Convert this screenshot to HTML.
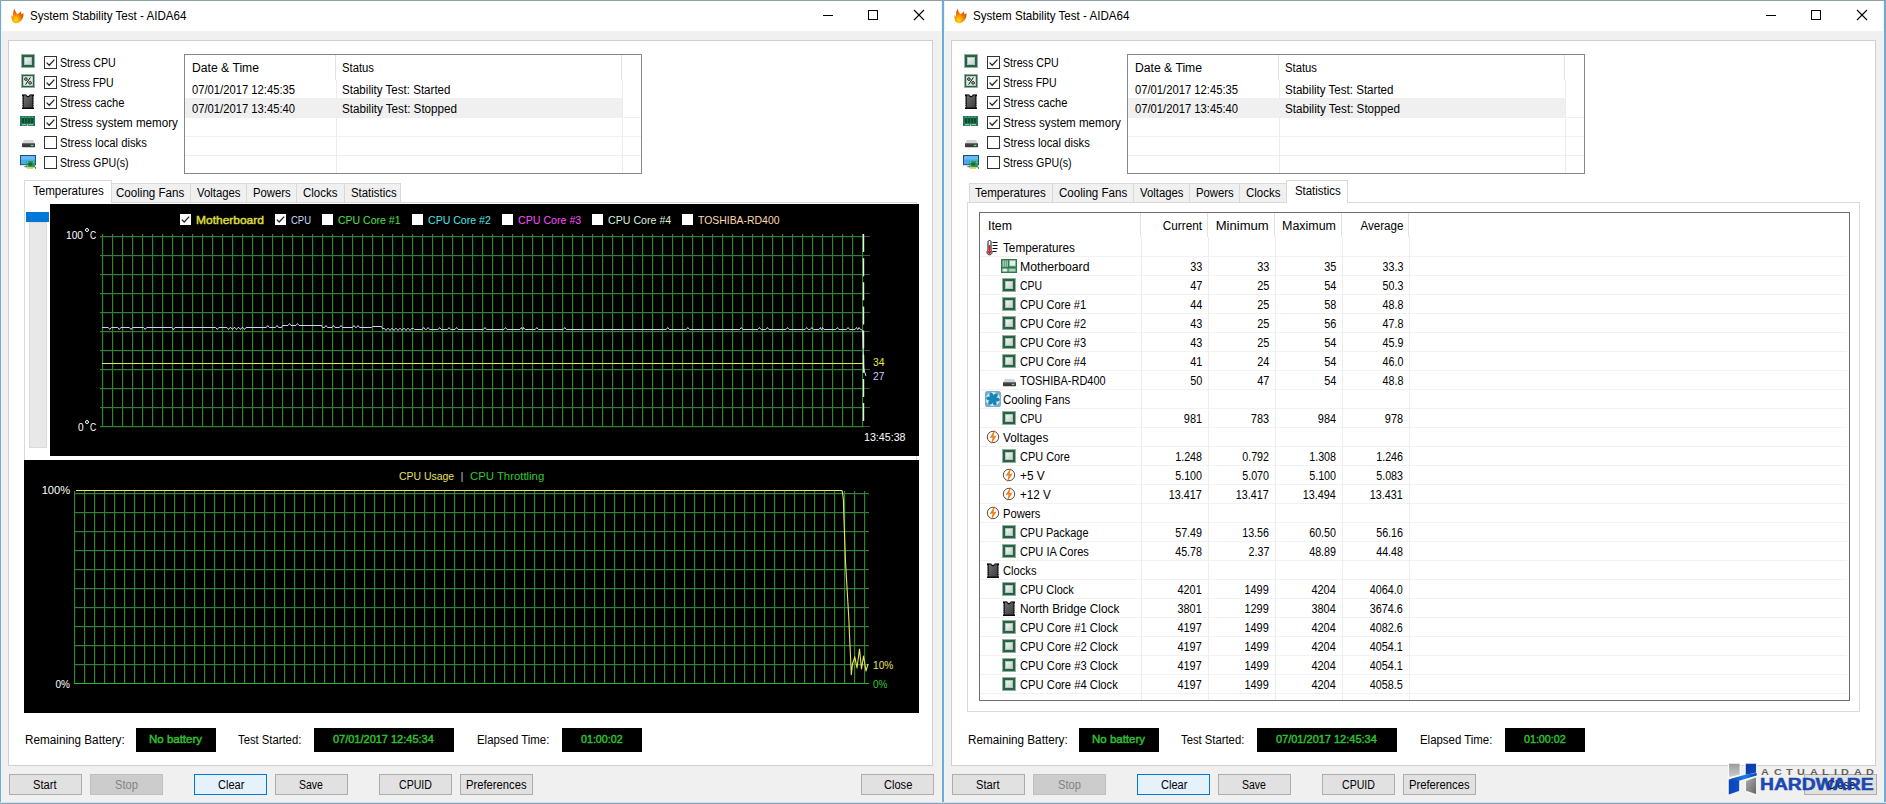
<!DOCTYPE html>
<html><head><meta charset="utf-8"><title>System Stability Test - AIDA64</title>
<style>
html,body{margin:0;padding:0;}
body{width:1886px;height:804px;position:relative;overflow:hidden;background:#f0f0f0;font-family:"Liberation Sans",sans-serif;}
div{position:absolute;}
.t{white-space:nowrap;}
svg{position:absolute;overflow:visible;}
</style></head><body>
<div style="left:0;top:0;width:1886px;height:804px;background:#f0f0f0"></div>
<div style="left:1px;top:1px;width:941px;height:30px;background:#fff;"></div>
<svg style="left:11px;top:7.5px" width="14" height="16" viewBox="0 0 14 16"><defs><radialGradient id="fg11" cx="0.38" cy="0.8" r="0.6"><stop offset="0" stop-color="#ffe000"/><stop offset="0.35" stop-color="#ffb000"/><stop offset="0.7" stop-color="#f57a00"/><stop offset="1" stop-color="#d85a00"/></radialGradient></defs>
<path d="M3.3 0.4 C4 3 5.2 4.8 6.6 6.2 C7.8 5.4 9 4.6 9.7 3.3 C10.2 4.6 10.4 5.6 10.6 6.6 C11.2 6.2 11.8 5.6 12.3 4.8 C13 7.6 12 10.6 10 12.8 C8.4 14.6 6.4 15.4 4.6 15.2 C2.2 14.8 0.6 12.6 0.6 10.2 C0.6 9.2 0.5 8.2 0.2 7.2 C0.8 7.6 1.4 8.2 1.9 8.8 C1.8 6 2.4 3 3.3 0.4 Z" fill="url(#fg11)"/></svg>
<div class="t" style="left:30px;top:8px;font-size:13px;line-height:15px;color:#000;transform:scaleX(0.8926);transform-origin:0 0;">System Stability Test - AIDA64</div>
<svg style="left:818px;top:5px" width="112" height="20" viewBox="0 0 112 20"><path d="M5 10.5 H15" stroke="#000" stroke-width="1" fill="none"/><rect x="50.5" y="5.5" width="9" height="9" stroke="#000" stroke-width="1" fill="none"/><path d="M96 5 L106 15 M106 5 L96 15" stroke="#000" stroke-width="1.1" fill="none"/></svg>
<div style="left:8px;top:40px;width:925px;height:726px;background:#fff;border:1px solid #cfcfcf;box-sizing:border-box;"></div>
<svg style="left:44px;top:56px" width="13" height="13" viewBox="0 0 13 13"><rect x="0.5" y="0.5" width="12" height="12" fill="#fff" stroke="#333" stroke-width="1"/><path d="M2.6 6.6 L5.2 9.2 L10.4 3.6" fill="none" stroke="#222" stroke-width="1.3"/></svg>
<div class="t" style="left:60px;top:56px;font-size:12px;line-height:14px;color:#000;transform:scaleX(0.8886);transform-origin:0 0;">Stress CPU</div>
<svg style="left:44px;top:76px" width="13" height="13" viewBox="0 0 13 13"><rect x="0.5" y="0.5" width="12" height="12" fill="#fff" stroke="#333" stroke-width="1"/><path d="M2.6 6.6 L5.2 9.2 L10.4 3.6" fill="none" stroke="#222" stroke-width="1.3"/></svg>
<div class="t" style="left:60px;top:76px;font-size:12px;line-height:14px;color:#000;transform:scaleX(0.8754);transform-origin:0 0;">Stress FPU</div>
<svg style="left:44px;top:96px" width="13" height="13" viewBox="0 0 13 13"><rect x="0.5" y="0.5" width="12" height="12" fill="#fff" stroke="#333" stroke-width="1"/><path d="M2.6 6.6 L5.2 9.2 L10.4 3.6" fill="none" stroke="#222" stroke-width="1.3"/></svg>
<div class="t" style="left:60px;top:96px;font-size:12px;line-height:14px;color:#000;transform:scaleX(0.9299);transform-origin:0 0;">Stress cache</div>
<svg style="left:44px;top:116px" width="13" height="13" viewBox="0 0 13 13"><rect x="0.5" y="0.5" width="12" height="12" fill="#fff" stroke="#333" stroke-width="1"/><path d="M2.6 6.6 L5.2 9.2 L10.4 3.6" fill="none" stroke="#222" stroke-width="1.3"/></svg>
<div class="t" style="left:60px;top:116px;font-size:12px;line-height:14px;color:#000;transform:scaleX(0.9654);transform-origin:0 0;">Stress system memory</div>
<svg style="left:44px;top:136px" width="13" height="13" viewBox="0 0 13 13"><rect x="0.5" y="0.5" width="12" height="12" fill="#fff" stroke="#333" stroke-width="1"/></svg>
<div class="t" style="left:60px;top:136px;font-size:12px;line-height:14px;color:#000;transform:scaleX(0.9364);transform-origin:0 0;">Stress local disks</div>
<svg style="left:44px;top:156px" width="13" height="13" viewBox="0 0 13 13"><rect x="0.5" y="0.5" width="12" height="12" fill="#fff" stroke="#333" stroke-width="1"/></svg>
<div class="t" style="left:60px;top:156px;font-size:12px;line-height:14px;color:#000;transform:scaleX(0.8870);transform-origin:0 0;">Stress GPU(s)</div>
<svg style="left:21px;top:54px" width="14" height="14" viewBox="0 0 14 14"><rect x="0.5" y="0.5" width="13" height="13" fill="none" stroke="#2b6145" stroke-width="1" stroke-dasharray="1 1"/><rect x="1" y="1" width="12" height="12" fill="#2b6145"/>
<defs><linearGradient id="cg21_54" x1="0" y1="0" x2="1" y2="1"><stop offset="0" stop-color="#f2f7f4"/><stop offset="1" stop-color="#c5cfcb"/></linearGradient></defs>
<rect x="3.5" y="3.5" width="7" height="7" fill="url(#cg21_54)" stroke="#a9c9b8" stroke-width="1"/></svg>
<svg style="left:21px;top:74px" width="14" height="14" viewBox="0 0 14 14"><rect x="0.5" y="0.5" width="13" height="13" fill="none" stroke="#2b6145" stroke-width="1" stroke-dasharray="1 1"/><rect x="1" y="1" width="12" height="12" fill="#2b6145"/>
<rect x="2.2" y="2.2" width="9.6" height="9.6" fill="#dcebe2"/>
<g stroke="#111" stroke-width="1" fill="none"><circle cx="4.9" cy="5.1" r="1.3"/><circle cx="9.1" cy="8.9" r="1.3"/><path d="M9.4 3.4 L4.6 10.6"/></g></svg>
<svg style="left:22px;top:94px" width="12" height="15" viewBox="0 0 12 15"><rect x="0" y="0.4" width="12" height="14.6" fill="#0a0a0a"/>
<defs><linearGradient id="ch22_94" x1="0" y1="0" x2="1" y2="1"><stop offset="0" stop-color="#707070"/><stop offset="1" stop-color="#3e3e3e"/></linearGradient></defs>
<path d="M2 1.4 H4 C4.4 4 7.6 4 8 1.4 H10 V13.6 H2 Z" fill="url(#ch22_94)"/>
<path d="M4.2 0 C4.6 2.6 7.4 2.6 7.8 0 Z" fill="#fff"/><rect x="0" y="2.60" width="1.2" height="0.95" fill="#fff"/><rect x="10.8" y="2.60" width="1.2" height="0.95" fill="#fff"/><rect x="0" y="4.55" width="1.2" height="0.95" fill="#fff"/><rect x="10.8" y="4.55" width="1.2" height="0.95" fill="#fff"/><rect x="0" y="6.50" width="1.2" height="0.95" fill="#fff"/><rect x="10.8" y="6.50" width="1.2" height="0.95" fill="#fff"/><rect x="0" y="8.45" width="1.2" height="0.95" fill="#fff"/><rect x="10.8" y="8.45" width="1.2" height="0.95" fill="#fff"/><rect x="0" y="10.40" width="1.2" height="0.95" fill="#fff"/><rect x="10.8" y="10.40" width="1.2" height="0.95" fill="#fff"/><rect x="0" y="12.35" width="1.2" height="0.95" fill="#fff"/><rect x="10.8" y="12.35" width="1.2" height="0.95" fill="#fff"/></svg>
<svg style="left:20px;top:116px" width="15" height="10" viewBox="0 0 15 10"><rect x="0" y="0" width="15" height="9.8" fill="#237c56"/>
<rect x="0" y="7.8" width="15" height="2" fill="#1c6a48"/>
<g fill="#0f4a33"><rect x="1.8" y="2" width="2.3" height="5"/><rect x="4.9" y="2" width="2.3" height="5"/><rect x="8" y="2" width="2.3" height="5"/><rect x="11.1" y="2" width="2.3" height="5"/></g>
<g fill="#9fd8bd"><rect x="1.8" y="8.2" width="4.4" height="1"/><rect x="8.4" y="8.2" width="4.8" height="1"/><rect x="2.4" y="0.8" width="1" height="0.9"/><rect x="5.5" y="0.8" width="1" height="0.9"/><rect x="8.6" y="0.8" width="1" height="0.9"/><rect x="11.7" y="0.8" width="1" height="0.9"/></g>
<rect x="6.9" y="8.4" width="1" height="1.4" fill="#fff"/></svg>
<svg style="left:21.5px;top:140px" width="13" height="8" viewBox="0 0 13 8"><path d="M2 0 H11 L13 3.4 H0 Z" fill="#d4d4d4"/>
<rect x="0" y="3.2" width="13" height="4" rx="0.6" fill="#3a3a3a"/>
<rect x="0" y="3.2" width="13" height="1" fill="#707070"/>
<rect x="8.8" y="4.8" width="2.6" height="1.3" fill="#5fe07a"/></svg>
<svg style="left:20px;top:155px" width="16" height="14" viewBox="0 0 16 14"><rect x="0.5" y="0.5" width="15" height="9.2" fill="#4aa8ec" stroke="#1e4f7a" stroke-width="1"/>
<rect x="1.2" y="1.2" width="13.6" height="3.2" fill="#6bbcf4"/>
<rect x="6.4" y="6" width="8.8" height="6.4" fill="#2f9a5c"/>
<rect x="8.2" y="7.6" width="4" height="3" fill="#176a40"/>
<rect x="7.2" y="6.6" width="1" height="1" fill="#b8f0c8"/><rect x="13.2" y="6.6" width="1" height="1" fill="#b8f0c8"/><rect x="7.2" y="10.6" width="1" height="1" fill="#b8f0c8"/>
<rect x="4.4" y="11.2" width="2.6" height="1" fill="#2a7a50"/>
<rect x="7" y="12.4" width="6" height="1.4" fill="#e8c838"/>
<rect x="15" y="12" width="0.8" height="2" fill="#2a7a50"/></svg>
<div style="left:184px;top:54px;width:458px;height:120px;background:#fff;border:1px solid #828790;box-sizing:border-box;"></div>
<div style="left:185px;top:98px;width:437px;height:19px;background:#f0f0f0;"></div>
<div style="left:185px;top:117px;width:456px;height:1px;background:#f0f0f0;"></div>
<div style="left:185px;top:136px;width:456px;height:1px;background:#f0f0f0;"></div>
<div style="left:185px;top:155px;width:456px;height:1px;background:#f0f0f0;"></div>
<div style="left:335px;top:55px;width:1px;height:25px;background:#e2e2e2;"></div>
<div style="left:621px;top:55px;width:1px;height:25px;background:#e2e2e2;"></div>
<div style="left:336px;top:80px;width:1px;height:18px;background:#ececec;"></div>
<div style="left:622px;top:80px;width:1px;height:93px;background:#ececec;"></div>
<div style="left:336px;top:117px;width:1px;height:56px;background:#ececec;"></div>
<div class="t" style="left:192px;top:61px;font-size:12px;line-height:14px;color:#000;transform:scaleX(1.0148);transform-origin:0 0;">Date &amp; Time</div>
<div class="t" style="left:342px;top:61px;font-size:12px;line-height:14px;color:#000;transform:scaleX(0.9406);transform-origin:0 0;">Status</div>
<div class="t" style="left:192px;top:83px;font-size:12px;line-height:14px;color:#000;transform:scaleX(0.9355);transform-origin:0 0;">07/01/2017 12:45:35</div>
<div class="t" style="left:342px;top:83px;font-size:12px;line-height:14px;color:#000;transform:scaleX(0.9644);transform-origin:0 0;">Stability Test: Started</div>
<div class="t" style="left:192px;top:102px;font-size:12px;line-height:14px;color:#000;transform:scaleX(0.9355);transform-origin:0 0;">07/01/2017 13:45:40</div>
<div class="t" style="left:342px;top:102px;font-size:12px;line-height:14px;color:#000;transform:scaleX(0.9703);transform-origin:0 0;">Stability Test: Stopped</div>
<div style="left:24px;top:202px;width:893px;height:510px;border:1px solid #d9d9d9;box-sizing:border-box;"></div>
<div style="left:111px;top:183px;width:80px;height:20px;background:#f0f0f0;border:1px solid #d9d9d9;box-sizing:border-box;"></div>
<div class="t" style="left:116.4px;top:186.3px;font-size:12px;line-height:14px;color:#000;transform:scaleX(0.9660);transform-origin:0 0;">Cooling Fans</div>
<div style="left:190px;top:183px;width:57px;height:20px;background:#f0f0f0;border:1px solid #d9d9d9;box-sizing:border-box;"></div>
<div class="t" style="left:197.4px;top:186.3px;font-size:12px;line-height:14px;color:#000;transform:scaleX(0.9449);transform-origin:0 0;">Voltages</div>
<div style="left:246px;top:183px;width:51px;height:20px;background:#f0f0f0;border:1px solid #d9d9d9;box-sizing:border-box;"></div>
<div class="t" style="left:253px;top:186.3px;font-size:12px;line-height:14px;color:#000;transform:scaleX(0.9421);transform-origin:0 0;">Powers</div>
<div style="left:296px;top:183px;width:49px;height:20px;background:#f0f0f0;border:1px solid #d9d9d9;box-sizing:border-box;"></div>
<div class="t" style="left:303.4px;top:186.3px;font-size:12px;line-height:14px;color:#000;transform:scaleX(0.9554);transform-origin:0 0;">Clocks</div>
<div style="left:344px;top:183px;width:57px;height:20px;background:#f0f0f0;border:1px solid #d9d9d9;box-sizing:border-box;"></div>
<div class="t" style="left:351.2px;top:186.3px;font-size:12px;line-height:14px;color:#000;transform:scaleX(0.9498);transform-origin:0 0;">Statistics</div>
<div style="left:24px;top:180px;width:88px;height:23px;background:#fff;border:1px solid #d9d9d9;box-sizing:border-box;border-bottom:none;"></div>
<div class="t" style="left:33px;top:184.3px;font-size:12px;line-height:14px;color:#000;transform:scaleX(0.9636);transform-origin:0 0;">Temperatures</div>
<div style="left:29px;top:222px;width:18px;height:226px;background:#e8e8e8;border:1px solid #dadada;box-sizing:border-box;"></div>
<div style="left:26px;top:212px;width:23px;height:10px;background:#0078d7;"></div>
<div style="left:50px;top:204px;width:869px;height:252px;background:#000;"></div>
<svg style="left:0px;top:0px" width="943" height="460" viewBox="0 0 943 460"><path d="M103.5 234 V427 M113.5 234 V427 M123.5 234 V427 M133.5 234 V427 M143.5 234 V427 M153.5 234 V427 M163.5 234 V427 M173.5 234 V427 M183.5 234 V427 M193.5 234 V427 M203.5 234 V427 M213.5 234 V427 M223.5 234 V427 M233.5 234 V427 M243.5 234 V427 M253.5 234 V427 M263.5 234 V427 M273.5 234 V427 M283.5 234 V427 M293.5 234 V427 M303.5 234 V427 M313.5 234 V427 M323.5 234 V427 M333.5 234 V427 M343.5 234 V427 M353.5 234 V427 M363.5 234 V427 M373.5 234 V427 M383.5 234 V427 M393.5 234 V427 M403.5 234 V427 M413.5 234 V427 M423.5 234 V427 M433.5 234 V427 M443.5 234 V427 M453.5 234 V427 M463.5 234 V427 M473.5 234 V427 M483.5 234 V427 M493.5 234 V427 M503.5 234 V427 M513.5 234 V427 M523.5 234 V427 M533.5 234 V427 M543.5 234 V427 M553.5 234 V427 M563.5 234 V427 M573.5 234 V427 M583.5 234 V427 M593.5 234 V427 M603.5 234 V427 M613.5 234 V427 M623.5 234 V427 M633.5 234 V427 M643.5 234 V427 M653.5 234 V427 M663.5 234 V427 M673.5 234 V427 M683.5 234 V427 M693.5 234 V427 M703.5 234 V427 M713.5 234 V427 M723.5 234 V427 M733.5 234 V427 M743.5 234 V427 M753.5 234 V427 M763.5 234 V427 M773.5 234 V427 M783.5 234 V427 M793.5 234 V427 M803.5 234 V427 M813.5 234 V427 M823.5 234 V427 M833.5 234 V427 M843.5 234 V427 M853.5 234 V427 M863.5 234 V427 " stroke="#002000" stroke-width="1" fill="none"/><path d="M100 237.5 H864 M100 256.5 H864 M100 275.5 H864 M100 294.5 H864 M100 313.5 H864 M100 332.5 H864 M100 351.5 H864 M100 370.5 H864 M100 389.5 H864 M100 408.5 H864 M100 427.5 H864 " stroke="#002000" stroke-width="1" fill="none"/><path d="M102.5 234 V427 M112.5 234 V427 M122.5 234 V427 M132.5 234 V427 M142.5 234 V427 M152.5 234 V427 M162.5 234 V427 M172.5 234 V427 M182.5 234 V427 M192.5 234 V427 M202.5 234 V427 M212.5 234 V427 M222.5 234 V427 M232.5 234 V427 M242.5 234 V427 M252.5 234 V427 M262.5 234 V427 M272.5 234 V427 M282.5 234 V427 M292.5 234 V427 M302.5 234 V427 M312.5 234 V427 M322.5 234 V427 M332.5 234 V427 M342.5 234 V427 M352.5 234 V427 M362.5 234 V427 M372.5 234 V427 M382.5 234 V427 M392.5 234 V427 M402.5 234 V427 M412.5 234 V427 M422.5 234 V427 M432.5 234 V427 M442.5 234 V427 M452.5 234 V427 M462.5 234 V427 M472.5 234 V427 M482.5 234 V427 M492.5 234 V427 M502.5 234 V427 M512.5 234 V427 M522.5 234 V427 M532.5 234 V427 M542.5 234 V427 M552.5 234 V427 M562.5 234 V427 M572.5 234 V427 M582.5 234 V427 M592.5 234 V427 M602.5 234 V427 M612.5 234 V427 M622.5 234 V427 M632.5 234 V427 M642.5 234 V427 M652.5 234 V427 M662.5 234 V427 M672.5 234 V427 M682.5 234 V427 M692.5 234 V427 M702.5 234 V427 M712.5 234 V427 M722.5 234 V427 M732.5 234 V427 M742.5 234 V427 M752.5 234 V427 M762.5 234 V427 M772.5 234 V427 M782.5 234 V427 M792.5 234 V427 M802.5 234 V427 M812.5 234 V427 M822.5 234 V427 M832.5 234 V427 M842.5 234 V427 M852.5 234 V427 M862.5 234 V427 " stroke="#3a7e3e" stroke-width="1" fill="none"/><path d="M100 236.5 H864 M100 255.5 H864 M100 274.5 H864 M100 293.5 H864 M100 312.5 H864 M100 331.5 H864 M100 350.5 H864 M100 369.5 H864 M100 388.5 H864 M100 407.5 H864 M100 426.5 H864 " stroke="#3a7e3e" stroke-width="1" fill="none"/><path d="M864 236.5 H870 M864 255.5 H870 M864 274.5 H870 M864 293.5 H870 M864 312.5 H870 M864 331.5 H870 M864 350.5 H870 M864 369.5 H870 M864 388.5 H870 M864 407.5 H870 M864 426.5 H870 " stroke="#3a5a3a" stroke-width="1" fill="none"/><path d="M102 363.5 H864" stroke="#e6e65a" stroke-width="1" fill="none"/><path d="M102.0 327.5 L108.3 327.5 L109.8 329.5 L111.3 327.5 L117.8 327.5 L119.3 329.5 L120.8 327.5 L129.5 327.5 L131.0 329.5 L132.5 327.5 L143.7 327.5 L145.2 329.5 L146.7 327.5 L171.9 327.5 L173.4 329.5 L174.9 327.5 L215.8 327.5 L217.3 329.5 L218.8 327.5 L227.0 327.5 L228.5 329.5 L230.0 327.5 L231.0 327.5 L232.5 329.5 L234.0 327.5 L235.0 327.5 L236.5 329.5 L238.0 327.5 L239.0 327.5 L240.5 329.5 L242.0 327.5 L243.0 327.5 L244.5 329.5 L246.0 327.5 L266.3 327.5 L267.8 325.5 L269.3 327.5 L275.5 327.5 L277.0 325.5 L278.5 327.5 L281.5 327.5 L282.5 325.5 L288.0 325.5 L289.5 323.5 L291.0 325.5 L296.0 325.5 L297.5 323.5 L299.0 325.5 L321.5 325.5 L322.5 327.5 L324.5 327.5 L326.0 325.5 L327.5 327.5 L332.0 327.5 L333.5 325.5 L335.0 327.5 L339.5 327.5 L341.0 325.5 L342.5 327.5 L352.5 327.5 L354.0 325.5 L355.5 327.5 L356.5 327.5 L358.0 325.5 L359.5 327.5 L371.5 327.5 L372.5 326.5 L381.5 326.5 L382.5 328.5 L384.5 328.5 L386.0 330.5 L387.5 328.5 L388.5 328.5 L390.0 330.5 L391.5 328.5 L392.5 328.5 L394.0 330.5 L395.5 328.5 L396.5 328.5 L398.0 330.5 L399.5 328.5 L400.5 328.5 L402.0 330.5 L403.5 328.5 L404.5 328.5 L406.0 330.5 L407.5 328.5 L408.5 328.5 L410.0 330.5 L411.5 328.5 L413.5 328.5 L414.5 329.5 L422.2 329.5 L423.7 327.5 L425.2 329.5 L426.5 329.5 L428.0 327.5 L429.5 329.5 L438.1 329.5 L439.6 327.5 L441.1 329.5 L447.5 329.5 L449.0 327.5 L450.5 329.5 L455.0 329.5 L456.5 327.5 L458.0 329.5 L483.5 329.5 L485.0 327.5 L486.5 329.5 L504.0 329.5 L505.5 327.5 L507.0 329.5 L520.0 329.5 L521.5 327.5 L522.0 329.5 L523.0 329.5 L523.5 327.5 L525.0 329.5 L535.3 329.5 L536.8 327.5 L538.3 329.5 L563.3 329.5 L564.8 327.5 L566.3 329.5 L666.2 329.5 L667.7 327.5 L669.2 329.5 L686.3 329.5 L687.8 327.5 L689.3 329.5 L739.8 329.5 L741.3 327.5 L742.8 329.5 L758.0 329.5 L759.5 327.5 L761.0 329.5 L765.9 329.5 L767.4 327.5 L768.9 329.5 L786.0 329.5 L787.5 327.5 L789.0 329.5 L805.1 329.5 L806.6 327.5 L808.1 329.5 L810.4 329.5 L811.9 327.5 L813.4 329.5 L819.0 329.5 L820.5 327.5 L821.0 329.5 L822.0 329.5 L822.5 327.5 L824.0 329.5 L835.9 329.5 L837.4 327.5 L838.9 329.5 L846.5 329.5 L848.0 327.5 L849.5 329.5 L855.0 329.5 L856.5 327.5 L857.5 329.5 L858.0 329.5 L859.0 327.5 L860.5 329.5 L861.5 329.5 L862.6 331.0 L863.2 345.0 L863.8 368.0 L864.6 372.0 L866.0 376.0" stroke="#d0d0f0" stroke-width="1" fill="none" stroke-linejoin="round"/><path d="M863.5 234 V427" stroke="#d8f8d8" stroke-width="1.4" stroke-dasharray="18 6.15" fill="none"/></svg>
<svg style="left:180px;top:214px" width="11" height="11" viewBox="0 0 11 11"><rect x="0" y="0" width="11" height="11" fill="#fff"/><path d="M1.8 5.6 L4.2 8 L9.2 2.6" fill="none" stroke="#222" stroke-width="1.3"/></svg>
<div class="t" style="left:195.5px;top:213.6px;font-size:11px;line-height:12px;color:#dcdc3c;-webkit-text-stroke:0.45px #dcdc3c;transform:scaleX(1.0888);transform-origin:0 0;">Motherboard</div>
<svg style="left:275px;top:214px" width="11" height="11" viewBox="0 0 11 11"><rect x="0" y="0" width="11" height="11" fill="#fff"/><path d="M1.8 5.6 L4.2 8 L9.2 2.6" fill="none" stroke="#222" stroke-width="1.3"/></svg>
<div class="t" style="left:290.5px;top:213.6px;font-size:11px;line-height:12px;color:#d4d8ff;transform:scaleX(0.8611);transform-origin:0 0;">CPU</div>
<svg style="left:322px;top:214px" width="11" height="11" viewBox="0 0 11 11"><rect x="0" y="0" width="11" height="11" fill="#fff"/></svg>
<div class="t" style="left:337.5px;top:213.6px;font-size:11px;line-height:12px;color:#4ce04c;transform:scaleX(0.9554);transform-origin:0 0;">CPU Core #1</div>
<svg style="left:412px;top:214px" width="11" height="11" viewBox="0 0 11 11"><rect x="0" y="0" width="11" height="11" fill="#fff"/></svg>
<div class="t" style="left:427.5px;top:213.6px;font-size:11px;line-height:12px;color:#4ce6e6;transform:scaleX(0.9600);transform-origin:0 0;">CPU Core #2</div>
<svg style="left:502px;top:214px" width="11" height="11" viewBox="0 0 11 11"><rect x="0" y="0" width="11" height="11" fill="#fff"/></svg>
<div class="t" style="left:517.5px;top:213.6px;font-size:11px;line-height:12px;color:#ff4cff;transform:scaleX(0.9661);transform-origin:0 0;">CPU Core #3</div>
<svg style="left:592px;top:214px" width="11" height="11" viewBox="0 0 11 11"><rect x="0" y="0" width="11" height="11" fill="#fff"/></svg>
<div class="t" style="left:607.5px;top:213.6px;font-size:11px;line-height:12px;color:#dcf0dc;transform:scaleX(0.9661);transform-origin:0 0;">CPU Core #4</div>
<svg style="left:682px;top:214px" width="11" height="11" viewBox="0 0 11 11"><rect x="0" y="0" width="11" height="11" fill="#fff"/></svg>
<div class="t" style="left:697.5px;top:213.6px;font-size:11px;line-height:12px;color:#ffd8b0;transform:scaleX(0.9477);transform-origin:0 0;">TOSHIBA-RD400</div>
<div class="t" style="left:66px;top:229px;font-size:11px;line-height:12px;color:#fff;transform:scaleX(0.9262);transform-origin:0 0;">100</div>
<div style="left:85px;top:228px;width:2px;height:2px;border:1px solid #fff;border-radius:50%"></div>
<div class="t" style="left:90px;top:229px;font-size:11px;line-height:12px;color:#fff;transform:scaleX(0.7805);transform-origin:0 0;">C</div>
<div class="t" style="left:77.5px;top:421px;font-size:11px;line-height:12px;color:#fff;transform:scaleX(0.9153);transform-origin:0 0;">0</div>
<div style="left:85px;top:420px;width:2px;height:2px;border:1px solid #fff;border-radius:50%"></div>
<div class="t" style="left:90px;top:421px;font-size:11px;line-height:12px;color:#fff;transform:scaleX(0.7805);transform-origin:0 0;">C</div>
<div class="t" style="left:872.5px;top:356.2px;font-size:11px;line-height:12px;color:#e8e83c;transform:scaleX(0.9399);transform-origin:0 0;">34</div>
<div class="t" style="left:872.5px;top:370px;font-size:11px;line-height:12px;color:#c8ccff;transform:scaleX(0.9399);transform-origin:0 0;">27</div>
<div class="t" style="left:864px;top:431.4px;font-size:11px;line-height:12px;color:#fff;transform:scaleX(0.9692);transform-origin:0 0;">13:45:38</div>
<div style="left:24px;top:460px;width:895px;height:253px;background:#000;"></div>
<svg style="left:0px;top:0px" width="943" height="720" viewBox="0 0 943 720"><path d="M75.5 491 V684 M85.5 491 V684 M95.5 491 V684 M105.5 491 V684 M115.5 491 V684 M125.5 491 V684 M135.5 491 V684 M145.5 491 V684 M155.5 491 V684 M165.5 491 V684 M175.5 491 V684 M185.5 491 V684 M195.5 491 V684 M205.5 491 V684 M215.5 491 V684 M225.5 491 V684 M235.5 491 V684 M245.5 491 V684 M255.5 491 V684 M265.5 491 V684 M275.5 491 V684 M285.5 491 V684 M295.5 491 V684 M305.5 491 V684 M315.5 491 V684 M325.5 491 V684 M335.5 491 V684 M345.5 491 V684 M355.5 491 V684 M365.5 491 V684 M375.5 491 V684 M385.5 491 V684 M395.5 491 V684 M405.5 491 V684 M415.5 491 V684 M425.5 491 V684 M435.5 491 V684 M445.5 491 V684 M455.5 491 V684 M465.5 491 V684 M475.5 491 V684 M485.5 491 V684 M495.5 491 V684 M505.5 491 V684 M515.5 491 V684 M525.5 491 V684 M535.5 491 V684 M545.5 491 V684 M555.5 491 V684 M565.5 491 V684 M575.5 491 V684 M585.5 491 V684 M595.5 491 V684 M605.5 491 V684 M615.5 491 V684 M625.5 491 V684 M635.5 491 V684 M645.5 491 V684 M655.5 491 V684 M665.5 491 V684 M675.5 491 V684 M685.5 491 V684 M695.5 491 V684 M705.5 491 V684 M715.5 491 V684 M725.5 491 V684 M735.5 491 V684 M745.5 491 V684 M755.5 491 V684 M765.5 491 V684 M775.5 491 V684 M785.5 491 V684 M795.5 491 V684 M805.5 491 V684 M815.5 491 V684 M825.5 491 V684 M835.5 491 V684 M845.5 491 V684 M855.5 491 V684 M865.5 491 V684 " stroke="#002000" stroke-width="1" fill="none"/><path d="M74 494.5 H869 M74 513.5 H869 M74 532.5 H869 M74 551.5 H869 M74 570.5 H869 M74 589.5 H869 M74 608.5 H869 M74 627.5 H869 M74 646.5 H869 M74 665.5 H869 " stroke="#002000" stroke-width="1" fill="none"/><path d="M74.5 491 V684 M84.5 491 V684 M94.5 491 V684 M104.5 491 V684 M114.5 491 V684 M124.5 491 V684 M134.5 491 V684 M144.5 491 V684 M154.5 491 V684 M164.5 491 V684 M174.5 491 V684 M184.5 491 V684 M194.5 491 V684 M204.5 491 V684 M214.5 491 V684 M224.5 491 V684 M234.5 491 V684 M244.5 491 V684 M254.5 491 V684 M264.5 491 V684 M274.5 491 V684 M284.5 491 V684 M294.5 491 V684 M304.5 491 V684 M314.5 491 V684 M324.5 491 V684 M334.5 491 V684 M344.5 491 V684 M354.5 491 V684 M364.5 491 V684 M374.5 491 V684 M384.5 491 V684 M394.5 491 V684 M404.5 491 V684 M414.5 491 V684 M424.5 491 V684 M434.5 491 V684 M444.5 491 V684 M454.5 491 V684 M464.5 491 V684 M474.5 491 V684 M484.5 491 V684 M494.5 491 V684 M504.5 491 V684 M514.5 491 V684 M524.5 491 V684 M534.5 491 V684 M544.5 491 V684 M554.5 491 V684 M564.5 491 V684 M574.5 491 V684 M584.5 491 V684 M594.5 491 V684 M604.5 491 V684 M614.5 491 V684 M624.5 491 V684 M634.5 491 V684 M644.5 491 V684 M654.5 491 V684 M664.5 491 V684 M674.5 491 V684 M684.5 491 V684 M694.5 491 V684 M704.5 491 V684 M714.5 491 V684 M724.5 491 V684 M734.5 491 V684 M744.5 491 V684 M754.5 491 V684 M764.5 491 V684 M774.5 491 V684 M784.5 491 V684 M794.5 491 V684 M804.5 491 V684 M814.5 491 V684 M824.5 491 V684 M834.5 491 V684 M844.5 491 V684 M854.5 491 V684 M864.5 491 V684 " stroke="#3a7e3e" stroke-width="1" fill="none"/><path d="M74 493.5 H869 M74 512.5 H869 M74 531.5 H869 M74 550.5 H869 M74 569.5 H869 M74 588.5 H869 M74 607.5 H869 M74 626.5 H869 M74 645.5 H869 M74 664.5 H869 " stroke="#3a7e3e" stroke-width="1" fill="none"/><path d="M74 683.5 H869" stroke="#2fb52f" stroke-width="1.2" fill="none"/><path d="M76 490.5 H841.9 L842.6 493 L843.4 500 L843.9 517 L844.9 545 L845.4 560 L848.9 620 L849.4 633 L850.3 652 L851.3 674.7 L852.5 664 L854.8 656.8 L857 668 L859.5 649 L861.5 669 L863.5 656 L866 671 L868 664" stroke="#e6e65a" stroke-width="1.1" fill="none" stroke-linejoin="round"/></svg>
<div class="t" style="left:398.6px;top:469.6px;font-size:11px;line-height:12px;color:#e6e064;transform:scaleX(0.9487);transform-origin:0 0;">CPU Usage</div>
<div class="t" style="left:460.5px;top:469.6px;font-size:11px;line-height:12px;color:#fff;transform:scaleX(0.6999);transform-origin:0 0;">|</div>
<div class="t" style="left:469.6px;top:469.6px;font-size:11px;line-height:12px;color:#32c832;transform:scaleX(1.0315);transform-origin:0 0;">CPU Throttling</div>
<div class="t" style="right:1816px;top:484.4px;font-size:11px;line-height:12px;color:#fff;transform:scaleX(1.0130);transform-origin:100% 0;">100%</div>
<div class="t" style="right:1816px;top:677.6px;font-size:11px;line-height:12px;color:#fff;transform:scaleX(0.9120);transform-origin:100% 0;">0%</div>
<div class="t" style="left:872.7px;top:659.2px;font-size:11px;line-height:12px;color:#e6e064;transform:scaleX(0.9220);transform-origin:0 0;">10%</div>
<div class="t" style="left:872.5px;top:677.6px;font-size:11px;line-height:12px;color:#32c832;transform:scaleX(0.9120);transform-origin:0 0;">0%</div>
<div class="t" style="left:24.5px;top:732.6px;font-size:12px;line-height:14px;color:#000;transform:scaleX(0.9770);transform-origin:0 0;">Remaining Battery:</div>
<div style="left:136px;top:728px;width:80px;height:24px;background:#000;"></div>
<div class="t" style="left:149.4px;top:733px;font-size:11px;line-height:12px;color:#2fc02f;-webkit-text-stroke:0.45px #2fc02f;transform:scaleX(1.0450);transform-origin:0 0;">No battery</div>
<div class="t" style="left:238.3px;top:732.6px;font-size:12px;line-height:14px;color:#000;transform:scaleX(0.9396);transform-origin:0 0;">Test Started:</div>
<div style="left:314px;top:728px;width:140px;height:24px;background:#000;"></div>
<div class="t" style="left:332.7px;top:733px;font-size:11px;line-height:12px;color:#2fc02f;-webkit-text-stroke:0.45px #2fc02f;transform:scaleX(0.9982);transform-origin:0 0;">07/01/2017 12:45:34</div>
<div class="t" style="left:477px;top:732.6px;font-size:12px;line-height:14px;color:#000;transform:scaleX(0.9521);transform-origin:0 0;">Elapsed Time:</div>
<div style="left:562px;top:728px;width:80px;height:24px;background:#000;"></div>
<div class="t" style="left:580.8px;top:733px;font-size:11px;line-height:12px;color:#2fc02f;-webkit-text-stroke:0.45px #2fc02f;transform:scaleX(0.9707);transform-origin:0 0;">01:00:02</div>
<div style="left:9px;top:774px;width:73px;height:21px;background:#e1e1e1;border:1px solid #adadad;box-sizing:border-box;"></div>
<div class="t" style="left:33.4px;top:778px;font-size:12px;line-height:14px;color:#000;transform:scaleX(0.9273);transform-origin:0 0;">Start</div>
<div style="left:90px;top:774px;width:73px;height:21px;background:#cccccc;border:1px solid #bfbfbf;box-sizing:border-box;"></div>
<div class="t" style="left:114.5px;top:778px;font-size:12px;line-height:14px;color:#838383;transform:scaleX(0.9276);transform-origin:0 0;">Stop</div>
<div style="left:194px;top:774px;width:73px;height:21px;background:#e5f1fb;border:1px solid #0078d7;box-sizing:border-box;"></div>
<div class="t" style="left:217.6px;top:778px;font-size:12px;line-height:14px;color:#000;transform:scaleX(0.9171);transform-origin:0 0;">Clear</div>
<div style="left:275px;top:774px;width:73px;height:21px;background:#e1e1e1;border:1px solid #adadad;box-sizing:border-box;"></div>
<div class="t" style="left:299.3px;top:778px;font-size:12px;line-height:14px;color:#000;transform:scaleX(0.8738);transform-origin:0 0;">Save</div>
<div style="left:379px;top:774px;width:73px;height:21px;background:#e1e1e1;border:1px solid #adadad;box-sizing:border-box;"></div>
<div class="t" style="left:398.6px;top:778px;font-size:12px;line-height:14px;color:#000;transform:scaleX(0.8812);transform-origin:0 0;">CPUID</div>
<div style="left:460px;top:774px;width:73px;height:21px;background:#e1e1e1;border:1px solid #adadad;box-sizing:border-box;"></div>
<div class="t" style="left:466.4px;top:778px;font-size:12px;line-height:14px;color:#000;transform:scaleX(0.9351);transform-origin:0 0;">Preferences</div>
<div style="left:861px;top:774px;width:73px;height:21px;background:#e1e1e1;border:1px solid #adadad;box-sizing:border-box;"></div>
<div class="t" style="left:883.9px;top:778px;font-size:12px;line-height:14px;color:#000;transform:scaleX(0.9224);transform-origin:0 0;">Close</div>
<div style="left:944px;top:1px;width:941px;height:30px;background:#fff;"></div>
<svg style="left:954px;top:7.5px" width="14" height="16" viewBox="0 0 14 16"><defs><radialGradient id="fg954" cx="0.38" cy="0.8" r="0.6"><stop offset="0" stop-color="#ffe000"/><stop offset="0.35" stop-color="#ffb000"/><stop offset="0.7" stop-color="#f57a00"/><stop offset="1" stop-color="#d85a00"/></radialGradient></defs>
<path d="M3.3 0.4 C4 3 5.2 4.8 6.6 6.2 C7.8 5.4 9 4.6 9.7 3.3 C10.2 4.6 10.4 5.6 10.6 6.6 C11.2 6.2 11.8 5.6 12.3 4.8 C13 7.6 12 10.6 10 12.8 C8.4 14.6 6.4 15.4 4.6 15.2 C2.2 14.8 0.6 12.6 0.6 10.2 C0.6 9.2 0.5 8.2 0.2 7.2 C0.8 7.6 1.4 8.2 1.9 8.8 C1.8 6 2.4 3 3.3 0.4 Z" fill="url(#fg954)"/></svg>
<div class="t" style="left:973px;top:8px;font-size:13px;line-height:15px;color:#000;transform:scaleX(0.8926);transform-origin:0 0;">System Stability Test - AIDA64</div>
<svg style="left:1761px;top:5px" width="112" height="20" viewBox="0 0 112 20"><path d="M5 10.5 H15" stroke="#000" stroke-width="1" fill="none"/><rect x="50.5" y="5.5" width="9" height="9" stroke="#000" stroke-width="1" fill="none"/><path d="M96 5 L106 15 M106 5 L96 15" stroke="#000" stroke-width="1.1" fill="none"/></svg>
<div style="left:951px;top:40px;width:925px;height:726px;background:#fff;border:1px solid #cfcfcf;box-sizing:border-box;"></div>
<svg style="left:987px;top:56px" width="13" height="13" viewBox="0 0 13 13"><rect x="0.5" y="0.5" width="12" height="12" fill="#fff" stroke="#333" stroke-width="1"/><path d="M2.6 6.6 L5.2 9.2 L10.4 3.6" fill="none" stroke="#222" stroke-width="1.3"/></svg>
<div class="t" style="left:1003px;top:56px;font-size:12px;line-height:14px;color:#000;transform:scaleX(0.8886);transform-origin:0 0;">Stress CPU</div>
<svg style="left:987px;top:76px" width="13" height="13" viewBox="0 0 13 13"><rect x="0.5" y="0.5" width="12" height="12" fill="#fff" stroke="#333" stroke-width="1"/><path d="M2.6 6.6 L5.2 9.2 L10.4 3.6" fill="none" stroke="#222" stroke-width="1.3"/></svg>
<div class="t" style="left:1003px;top:76px;font-size:12px;line-height:14px;color:#000;transform:scaleX(0.8754);transform-origin:0 0;">Stress FPU</div>
<svg style="left:987px;top:96px" width="13" height="13" viewBox="0 0 13 13"><rect x="0.5" y="0.5" width="12" height="12" fill="#fff" stroke="#333" stroke-width="1"/><path d="M2.6 6.6 L5.2 9.2 L10.4 3.6" fill="none" stroke="#222" stroke-width="1.3"/></svg>
<div class="t" style="left:1003px;top:96px;font-size:12px;line-height:14px;color:#000;transform:scaleX(0.9299);transform-origin:0 0;">Stress cache</div>
<svg style="left:987px;top:116px" width="13" height="13" viewBox="0 0 13 13"><rect x="0.5" y="0.5" width="12" height="12" fill="#fff" stroke="#333" stroke-width="1"/><path d="M2.6 6.6 L5.2 9.2 L10.4 3.6" fill="none" stroke="#222" stroke-width="1.3"/></svg>
<div class="t" style="left:1003px;top:116px;font-size:12px;line-height:14px;color:#000;transform:scaleX(0.9654);transform-origin:0 0;">Stress system memory</div>
<svg style="left:987px;top:136px" width="13" height="13" viewBox="0 0 13 13"><rect x="0.5" y="0.5" width="12" height="12" fill="#fff" stroke="#333" stroke-width="1"/></svg>
<div class="t" style="left:1003px;top:136px;font-size:12px;line-height:14px;color:#000;transform:scaleX(0.9364);transform-origin:0 0;">Stress local disks</div>
<svg style="left:987px;top:156px" width="13" height="13" viewBox="0 0 13 13"><rect x="0.5" y="0.5" width="12" height="12" fill="#fff" stroke="#333" stroke-width="1"/></svg>
<div class="t" style="left:1003px;top:156px;font-size:12px;line-height:14px;color:#000;transform:scaleX(0.8870);transform-origin:0 0;">Stress GPU(s)</div>
<svg style="left:964px;top:54px" width="14" height="14" viewBox="0 0 14 14"><rect x="0.5" y="0.5" width="13" height="13" fill="none" stroke="#2b6145" stroke-width="1" stroke-dasharray="1 1"/><rect x="1" y="1" width="12" height="12" fill="#2b6145"/>
<defs><linearGradient id="cg964_54" x1="0" y1="0" x2="1" y2="1"><stop offset="0" stop-color="#f2f7f4"/><stop offset="1" stop-color="#c5cfcb"/></linearGradient></defs>
<rect x="3.5" y="3.5" width="7" height="7" fill="url(#cg964_54)" stroke="#a9c9b8" stroke-width="1"/></svg>
<svg style="left:964px;top:74px" width="14" height="14" viewBox="0 0 14 14"><rect x="0.5" y="0.5" width="13" height="13" fill="none" stroke="#2b6145" stroke-width="1" stroke-dasharray="1 1"/><rect x="1" y="1" width="12" height="12" fill="#2b6145"/>
<rect x="2.2" y="2.2" width="9.6" height="9.6" fill="#dcebe2"/>
<g stroke="#111" stroke-width="1" fill="none"><circle cx="4.9" cy="5.1" r="1.3"/><circle cx="9.1" cy="8.9" r="1.3"/><path d="M9.4 3.4 L4.6 10.6"/></g></svg>
<svg style="left:965px;top:94px" width="12" height="15" viewBox="0 0 12 15"><rect x="0" y="0.4" width="12" height="14.6" fill="#0a0a0a"/>
<defs><linearGradient id="ch965_94" x1="0" y1="0" x2="1" y2="1"><stop offset="0" stop-color="#707070"/><stop offset="1" stop-color="#3e3e3e"/></linearGradient></defs>
<path d="M2 1.4 H4 C4.4 4 7.6 4 8 1.4 H10 V13.6 H2 Z" fill="url(#ch965_94)"/>
<path d="M4.2 0 C4.6 2.6 7.4 2.6 7.8 0 Z" fill="#fff"/><rect x="0" y="2.60" width="1.2" height="0.95" fill="#fff"/><rect x="10.8" y="2.60" width="1.2" height="0.95" fill="#fff"/><rect x="0" y="4.55" width="1.2" height="0.95" fill="#fff"/><rect x="10.8" y="4.55" width="1.2" height="0.95" fill="#fff"/><rect x="0" y="6.50" width="1.2" height="0.95" fill="#fff"/><rect x="10.8" y="6.50" width="1.2" height="0.95" fill="#fff"/><rect x="0" y="8.45" width="1.2" height="0.95" fill="#fff"/><rect x="10.8" y="8.45" width="1.2" height="0.95" fill="#fff"/><rect x="0" y="10.40" width="1.2" height="0.95" fill="#fff"/><rect x="10.8" y="10.40" width="1.2" height="0.95" fill="#fff"/><rect x="0" y="12.35" width="1.2" height="0.95" fill="#fff"/><rect x="10.8" y="12.35" width="1.2" height="0.95" fill="#fff"/></svg>
<svg style="left:963px;top:116px" width="15" height="10" viewBox="0 0 15 10"><rect x="0" y="0" width="15" height="9.8" fill="#237c56"/>
<rect x="0" y="7.8" width="15" height="2" fill="#1c6a48"/>
<g fill="#0f4a33"><rect x="1.8" y="2" width="2.3" height="5"/><rect x="4.9" y="2" width="2.3" height="5"/><rect x="8" y="2" width="2.3" height="5"/><rect x="11.1" y="2" width="2.3" height="5"/></g>
<g fill="#9fd8bd"><rect x="1.8" y="8.2" width="4.4" height="1"/><rect x="8.4" y="8.2" width="4.8" height="1"/><rect x="2.4" y="0.8" width="1" height="0.9"/><rect x="5.5" y="0.8" width="1" height="0.9"/><rect x="8.6" y="0.8" width="1" height="0.9"/><rect x="11.7" y="0.8" width="1" height="0.9"/></g>
<rect x="6.9" y="8.4" width="1" height="1.4" fill="#fff"/></svg>
<svg style="left:964.5px;top:140px" width="13" height="8" viewBox="0 0 13 8"><path d="M2 0 H11 L13 3.4 H0 Z" fill="#d4d4d4"/>
<rect x="0" y="3.2" width="13" height="4" rx="0.6" fill="#3a3a3a"/>
<rect x="0" y="3.2" width="13" height="1" fill="#707070"/>
<rect x="8.8" y="4.8" width="2.6" height="1.3" fill="#5fe07a"/></svg>
<svg style="left:963px;top:155px" width="16" height="14" viewBox="0 0 16 14"><rect x="0.5" y="0.5" width="15" height="9.2" fill="#4aa8ec" stroke="#1e4f7a" stroke-width="1"/>
<rect x="1.2" y="1.2" width="13.6" height="3.2" fill="#6bbcf4"/>
<rect x="6.4" y="6" width="8.8" height="6.4" fill="#2f9a5c"/>
<rect x="8.2" y="7.6" width="4" height="3" fill="#176a40"/>
<rect x="7.2" y="6.6" width="1" height="1" fill="#b8f0c8"/><rect x="13.2" y="6.6" width="1" height="1" fill="#b8f0c8"/><rect x="7.2" y="10.6" width="1" height="1" fill="#b8f0c8"/>
<rect x="4.4" y="11.2" width="2.6" height="1" fill="#2a7a50"/>
<rect x="7" y="12.4" width="6" height="1.4" fill="#e8c838"/>
<rect x="15" y="12" width="0.8" height="2" fill="#2a7a50"/></svg>
<div style="left:1127px;top:54px;width:458px;height:120px;background:#fff;border:1px solid #828790;box-sizing:border-box;"></div>
<div style="left:1128px;top:98px;width:437px;height:19px;background:#f0f0f0;"></div>
<div style="left:1128px;top:117px;width:456px;height:1px;background:#f0f0f0;"></div>
<div style="left:1128px;top:136px;width:456px;height:1px;background:#f0f0f0;"></div>
<div style="left:1128px;top:155px;width:456px;height:1px;background:#f0f0f0;"></div>
<div style="left:1278px;top:55px;width:1px;height:25px;background:#e2e2e2;"></div>
<div style="left:1564px;top:55px;width:1px;height:25px;background:#e2e2e2;"></div>
<div style="left:1279px;top:80px;width:1px;height:18px;background:#ececec;"></div>
<div style="left:1565px;top:80px;width:1px;height:93px;background:#ececec;"></div>
<div style="left:1279px;top:117px;width:1px;height:56px;background:#ececec;"></div>
<div class="t" style="left:1135px;top:61px;font-size:12px;line-height:14px;color:#000;transform:scaleX(1.0148);transform-origin:0 0;">Date &amp; Time</div>
<div class="t" style="left:1285px;top:61px;font-size:12px;line-height:14px;color:#000;transform:scaleX(0.9406);transform-origin:0 0;">Status</div>
<div class="t" style="left:1135px;top:83px;font-size:12px;line-height:14px;color:#000;transform:scaleX(0.9355);transform-origin:0 0;">07/01/2017 12:45:35</div>
<div class="t" style="left:1285px;top:83px;font-size:12px;line-height:14px;color:#000;transform:scaleX(0.9644);transform-origin:0 0;">Stability Test: Started</div>
<div class="t" style="left:1135px;top:102px;font-size:12px;line-height:14px;color:#000;transform:scaleX(0.9355);transform-origin:0 0;">07/01/2017 13:45:40</div>
<div class="t" style="left:1285px;top:102px;font-size:12px;line-height:14px;color:#000;transform:scaleX(0.9703);transform-origin:0 0;">Stability Test: Stopped</div>
<div style="left:967px;top:202px;width:893px;height:510px;border:1px solid #d9d9d9;box-sizing:border-box;"></div>
<div style="left:969px;top:183px;width:84px;height:20px;background:#f0f0f0;border:1px solid #d9d9d9;box-sizing:border-box;"></div>
<div class="t" style="left:975.3px;top:186.3px;font-size:12px;line-height:14px;color:#000;transform:scaleX(0.9636);transform-origin:0 0;">Temperatures</div>
<div style="left:1052px;top:183px;width:82px;height:20px;background:#f0f0f0;border:1px solid #d9d9d9;box-sizing:border-box;"></div>
<div class="t" style="left:1059.3px;top:186.3px;font-size:12px;line-height:14px;color:#000;transform:scaleX(0.9660);transform-origin:0 0;">Cooling Fans</div>
<div style="left:1133px;top:183px;width:57px;height:20px;background:#f0f0f0;border:1px solid #d9d9d9;box-sizing:border-box;"></div>
<div class="t" style="left:1140.3px;top:186.3px;font-size:12px;line-height:14px;color:#000;transform:scaleX(0.9449);transform-origin:0 0;">Voltages</div>
<div style="left:1189px;top:183px;width:51px;height:20px;background:#f0f0f0;border:1px solid #d9d9d9;box-sizing:border-box;"></div>
<div class="t" style="left:1196px;top:186.3px;font-size:12px;line-height:14px;color:#000;transform:scaleX(0.9421);transform-origin:0 0;">Powers</div>
<div style="left:1239px;top:183px;width:48px;height:20px;background:#f0f0f0;border:1px solid #d9d9d9;box-sizing:border-box;"></div>
<div class="t" style="left:1246.3px;top:186.3px;font-size:12px;line-height:14px;color:#000;transform:scaleX(0.9554);transform-origin:0 0;">Clocks</div>
<div style="left:1286px;top:180px;width:62px;height:23px;background:#fff;border:1px solid #d9d9d9;box-sizing:border-box;border-bottom:none;"></div>
<div class="t" style="left:1294.5px;top:184.3px;font-size:12px;line-height:14px;color:#000;transform:scaleX(0.9498);transform-origin:0 0;">Statistics</div>
<div style="left:979px;top:212px;width:871px;height:489px;background:#fff;border:1px solid #6d6d6d;box-sizing:border-box;"></div>
<div style="left:980px;top:256px;width:867px;height:1px;background:#f2f2f2;"></div>
<div style="left:980px;top:275px;width:867px;height:1px;background:#f2f2f2;"></div>
<div style="left:980px;top:294px;width:867px;height:1px;background:#f2f2f2;"></div>
<div style="left:980px;top:313px;width:867px;height:1px;background:#f2f2f2;"></div>
<div style="left:980px;top:332px;width:867px;height:1px;background:#f2f2f2;"></div>
<div style="left:980px;top:351px;width:867px;height:1px;background:#f2f2f2;"></div>
<div style="left:980px;top:370px;width:867px;height:1px;background:#f2f2f2;"></div>
<div style="left:980px;top:389px;width:867px;height:1px;background:#f2f2f2;"></div>
<div style="left:980px;top:408px;width:867px;height:1px;background:#f2f2f2;"></div>
<div style="left:980px;top:427px;width:867px;height:1px;background:#f2f2f2;"></div>
<div style="left:980px;top:446px;width:867px;height:1px;background:#f2f2f2;"></div>
<div style="left:980px;top:465px;width:867px;height:1px;background:#f2f2f2;"></div>
<div style="left:980px;top:484px;width:867px;height:1px;background:#f2f2f2;"></div>
<div style="left:980px;top:503px;width:867px;height:1px;background:#f2f2f2;"></div>
<div style="left:980px;top:522px;width:867px;height:1px;background:#f2f2f2;"></div>
<div style="left:980px;top:541px;width:867px;height:1px;background:#f2f2f2;"></div>
<div style="left:980px;top:560px;width:867px;height:1px;background:#f2f2f2;"></div>
<div style="left:980px;top:579px;width:867px;height:1px;background:#f2f2f2;"></div>
<div style="left:980px;top:598px;width:867px;height:1px;background:#f2f2f2;"></div>
<div style="left:980px;top:617px;width:867px;height:1px;background:#f2f2f2;"></div>
<div style="left:980px;top:636px;width:867px;height:1px;background:#f2f2f2;"></div>
<div style="left:980px;top:655px;width:867px;height:1px;background:#f2f2f2;"></div>
<div style="left:980px;top:674px;width:867px;height:1px;background:#f2f2f2;"></div>
<div style="left:980px;top:693px;width:867px;height:1px;background:#f2f2f2;"></div>
<div style="left:1140px;top:213px;width:1px;height:24px;background:#e2e2e2;"></div>
<div style="left:1141px;top:237px;width:1px;height:463px;background:#ededed;"></div>
<div style="left:1207px;top:213px;width:1px;height:24px;background:#e2e2e2;"></div>
<div style="left:1208px;top:237px;width:1px;height:463px;background:#ededed;"></div>
<div style="left:1274px;top:213px;width:1px;height:24px;background:#e2e2e2;"></div>
<div style="left:1275px;top:237px;width:1px;height:463px;background:#ededed;"></div>
<div style="left:1341px;top:213px;width:1px;height:24px;background:#e2e2e2;"></div>
<div style="left:1342px;top:237px;width:1px;height:463px;background:#ededed;"></div>
<div style="left:1408px;top:213px;width:1px;height:24px;background:#e2e2e2;"></div>
<div style="left:1409px;top:237px;width:1px;height:463px;background:#ededed;"></div>
<div class="t" style="left:987.5px;top:218.8px;font-size:12px;line-height:14px;color:#000;transform:scaleX(1.0284);transform-origin:0 0;">Item</div>
<div class="t" style="right:684px;top:218.8px;font-size:12px;line-height:14px;color:#000;transform:scaleX(0.9796);transform-origin:100% 0;">Current</div>
<div class="t" style="right:617px;top:218.8px;font-size:12px;line-height:14px;color:#000;transform:scaleX(1.0890);transform-origin:100% 0;">Minimum</div>
<div class="t" style="right:550px;top:218.8px;font-size:12px;line-height:14px;color:#000;transform:scaleX(1.0384);transform-origin:100% 0;">Maximum</div>
<div class="t" style="right:483px;top:218.8px;font-size:12px;line-height:14px;color:#000;transform:scaleX(0.9667);transform-origin:100% 0;">Average</div>
<svg style="left:986px;top:239.5px" width="12" height="16" viewBox="0 0 12 16"><g stroke="#111" stroke-width="1" fill="none">
<path d="M6.5 2.5 H11.5 M6.5 5.5 H11.5 M6.5 8.5 H11.5 M6.5 11.5 H10.5"/></g>
<path d="M2 1.6 C2 0.2 5 0.2 5 1.6 V10.2 C6.6 11.2 6.4 14.8 3.5 14.8 C0.6 14.8 0.4 11.2 2 10.2 Z" fill="#fff" stroke="#111" stroke-width="1"/>
<path d="M2.6 5 H4.4 V10.6 C5.6 11.4 5.4 14.1 3.5 14.1 C1.6 14.1 1.4 11.4 2.6 10.6 Z" fill="#d81e2c"/></svg>
<div class="t" style="left:1003.2px;top:241px;font-size:12px;line-height:14px;color:#000;transform:scaleX(0.9787);transform-origin:0 0;">Temperatures</div>
<svg style="left:1001.3px;top:259px" width="16" height="14" viewBox="0 0 16 14"><rect x="0" y="0" width="16" height="14" fill="#2f7a50"/>
<g fill="#cfe6d8"><rect x="1.6" y="1.4" width="1.1" height="6.4"/><rect x="3.6" y="1.4" width="1.1" height="6.4"/><rect x="5.6" y="1.4" width="1.1" height="6.4"/></g>
<rect x="8.6" y="1.6" width="5.8" height="5.4" fill="#e6f0ea" stroke="#8fc0a4" stroke-width="0.8"/>
<rect x="1.4" y="9.6" width="5" height="3" fill="#dfeee5"/>
<rect x="7.6" y="9.6" width="7" height="3" fill="#a9d4bb"/></svg>
<div class="t" style="left:1019.5px;top:260px;font-size:12px;line-height:14px;color:#000;transform:scaleX(1.0211);transform-origin:0 0;">Motherboard</div>
<div class="t" style="right:684px;top:260px;font-size:12px;line-height:14px;color:#000;transform:scaleX(0.9094);transform-origin:100% 0;">33</div>
<div class="t" style="right:617px;top:260px;font-size:12px;line-height:14px;color:#000;transform:scaleX(0.9094);transform-origin:100% 0;">33</div>
<div class="t" style="right:550px;top:260px;font-size:12px;line-height:14px;color:#000;transform:scaleX(0.9094);transform-origin:100% 0;">35</div>
<div class="t" style="right:483px;top:260px;font-size:12px;line-height:14px;color:#000;transform:scaleX(0.8894);transform-origin:100% 0;">33.3</div>
<svg style="left:1002px;top:277.8px" width="14" height="14" viewBox="0 0 14 14"><rect x="0.5" y="0.5" width="13" height="13" fill="none" stroke="#2b6145" stroke-width="1" stroke-dasharray="1 1"/><rect x="1" y="1" width="12" height="12" fill="#2b6145"/>
<defs><linearGradient id="cg1002_277_8" x1="0" y1="0" x2="1" y2="1"><stop offset="0" stop-color="#f2f7f4"/><stop offset="1" stop-color="#c5cfcb"/></linearGradient></defs>
<rect x="3.5" y="3.5" width="7" height="7" fill="url(#cg1002_277_8)" stroke="#a9c9b8" stroke-width="1"/></svg>
<div class="t" style="left:1019.5px;top:279px;font-size:12px;line-height:14px;color:#000;transform:scaleX(0.8710);transform-origin:0 0;">CPU</div>
<div class="t" style="right:684px;top:279px;font-size:12px;line-height:14px;color:#000;transform:scaleX(0.9094);transform-origin:100% 0;">47</div>
<div class="t" style="right:617px;top:279px;font-size:12px;line-height:14px;color:#000;transform:scaleX(0.9094);transform-origin:100% 0;">25</div>
<div class="t" style="right:550px;top:279px;font-size:12px;line-height:14px;color:#000;transform:scaleX(0.9094);transform-origin:100% 0;">54</div>
<div class="t" style="right:483px;top:279px;font-size:12px;line-height:14px;color:#000;transform:scaleX(0.8894);transform-origin:100% 0;">50.3</div>
<svg style="left:1002px;top:296.8px" width="14" height="14" viewBox="0 0 14 14"><rect x="0.5" y="0.5" width="13" height="13" fill="none" stroke="#2b6145" stroke-width="1" stroke-dasharray="1 1"/><rect x="1" y="1" width="12" height="12" fill="#2b6145"/>
<defs><linearGradient id="cg1002_296_8" x1="0" y1="0" x2="1" y2="1"><stop offset="0" stop-color="#f2f7f4"/><stop offset="1" stop-color="#c5cfcb"/></linearGradient></defs>
<rect x="3.5" y="3.5" width="7" height="7" fill="url(#cg1002_296_8)" stroke="#a9c9b8" stroke-width="1"/></svg>
<div class="t" style="left:1019.5px;top:298px;font-size:12px;line-height:14px;color:#000;transform:scaleX(0.9268);transform-origin:0 0;">CPU Core #1</div>
<div class="t" style="right:684px;top:298px;font-size:12px;line-height:14px;color:#000;transform:scaleX(0.9094);transform-origin:100% 0;">44</div>
<div class="t" style="right:617px;top:298px;font-size:12px;line-height:14px;color:#000;transform:scaleX(0.9094);transform-origin:100% 0;">25</div>
<div class="t" style="right:550px;top:298px;font-size:12px;line-height:14px;color:#000;transform:scaleX(0.9094);transform-origin:100% 0;">58</div>
<div class="t" style="right:483px;top:298px;font-size:12px;line-height:14px;color:#000;transform:scaleX(0.8894);transform-origin:100% 0;">48.8</div>
<svg style="left:1002px;top:315.8px" width="14" height="14" viewBox="0 0 14 14"><rect x="0.5" y="0.5" width="13" height="13" fill="none" stroke="#2b6145" stroke-width="1" stroke-dasharray="1 1"/><rect x="1" y="1" width="12" height="12" fill="#2b6145"/>
<defs><linearGradient id="cg1002_315_8" x1="0" y1="0" x2="1" y2="1"><stop offset="0" stop-color="#f2f7f4"/><stop offset="1" stop-color="#c5cfcb"/></linearGradient></defs>
<rect x="3.5" y="3.5" width="7" height="7" fill="url(#cg1002_315_8)" stroke="#a9c9b8" stroke-width="1"/></svg>
<div class="t" style="left:1019.5px;top:317px;font-size:12px;line-height:14px;color:#000;transform:scaleX(0.9268);transform-origin:0 0;">CPU Core #2</div>
<div class="t" style="right:684px;top:317px;font-size:12px;line-height:14px;color:#000;transform:scaleX(0.9094);transform-origin:100% 0;">43</div>
<div class="t" style="right:617px;top:317px;font-size:12px;line-height:14px;color:#000;transform:scaleX(0.9094);transform-origin:100% 0;">25</div>
<div class="t" style="right:550px;top:317px;font-size:12px;line-height:14px;color:#000;transform:scaleX(0.9094);transform-origin:100% 0;">56</div>
<div class="t" style="right:483px;top:317px;font-size:12px;line-height:14px;color:#000;transform:scaleX(0.8894);transform-origin:100% 0;">47.8</div>
<svg style="left:1002px;top:334.8px" width="14" height="14" viewBox="0 0 14 14"><rect x="0.5" y="0.5" width="13" height="13" fill="none" stroke="#2b6145" stroke-width="1" stroke-dasharray="1 1"/><rect x="1" y="1" width="12" height="12" fill="#2b6145"/>
<defs><linearGradient id="cg1002_334_8" x1="0" y1="0" x2="1" y2="1"><stop offset="0" stop-color="#f2f7f4"/><stop offset="1" stop-color="#c5cfcb"/></linearGradient></defs>
<rect x="3.5" y="3.5" width="7" height="7" fill="url(#cg1002_334_8)" stroke="#a9c9b8" stroke-width="1"/></svg>
<div class="t" style="left:1019.5px;top:336px;font-size:12px;line-height:14px;color:#000;transform:scaleX(0.9268);transform-origin:0 0;">CPU Core #3</div>
<div class="t" style="right:684px;top:336px;font-size:12px;line-height:14px;color:#000;transform:scaleX(0.9094);transform-origin:100% 0;">43</div>
<div class="t" style="right:617px;top:336px;font-size:12px;line-height:14px;color:#000;transform:scaleX(0.9094);transform-origin:100% 0;">25</div>
<div class="t" style="right:550px;top:336px;font-size:12px;line-height:14px;color:#000;transform:scaleX(0.9094);transform-origin:100% 0;">54</div>
<div class="t" style="right:483px;top:336px;font-size:12px;line-height:14px;color:#000;transform:scaleX(0.8894);transform-origin:100% 0;">45.9</div>
<svg style="left:1002px;top:353.8px" width="14" height="14" viewBox="0 0 14 14"><rect x="0.5" y="0.5" width="13" height="13" fill="none" stroke="#2b6145" stroke-width="1" stroke-dasharray="1 1"/><rect x="1" y="1" width="12" height="12" fill="#2b6145"/>
<defs><linearGradient id="cg1002_353_8" x1="0" y1="0" x2="1" y2="1"><stop offset="0" stop-color="#f2f7f4"/><stop offset="1" stop-color="#c5cfcb"/></linearGradient></defs>
<rect x="3.5" y="3.5" width="7" height="7" fill="url(#cg1002_353_8)" stroke="#a9c9b8" stroke-width="1"/></svg>
<div class="t" style="left:1019.5px;top:355px;font-size:12px;line-height:14px;color:#000;transform:scaleX(0.9268);transform-origin:0 0;">CPU Core #4</div>
<div class="t" style="right:684px;top:355px;font-size:12px;line-height:14px;color:#000;transform:scaleX(0.9094);transform-origin:100% 0;">41</div>
<div class="t" style="right:617px;top:355px;font-size:12px;line-height:14px;color:#000;transform:scaleX(0.9094);transform-origin:100% 0;">24</div>
<div class="t" style="right:550px;top:355px;font-size:12px;line-height:14px;color:#000;transform:scaleX(0.9094);transform-origin:100% 0;">54</div>
<div class="t" style="right:483px;top:355px;font-size:12px;line-height:14px;color:#000;transform:scaleX(0.8894);transform-origin:100% 0;">46.0</div>
<svg style="left:1002.5px;top:379px" width="13" height="8" viewBox="0 0 13 8"><path d="M2 0 H11 L13 3.4 H0 Z" fill="#d4d4d4"/>
<rect x="0" y="3.2" width="13" height="4" rx="0.6" fill="#3a3a3a"/>
<rect x="0" y="3.2" width="13" height="1" fill="#707070"/>
<rect x="8.8" y="4.8" width="2.6" height="1.3" fill="#5fe07a"/></svg>
<div class="t" style="left:1019.5px;top:374px;font-size:12px;line-height:14px;color:#000;transform:scaleX(0.9125);transform-origin:0 0;">TOSHIBA-RD400</div>
<div class="t" style="right:684px;top:374px;font-size:12px;line-height:14px;color:#000;transform:scaleX(0.9094);transform-origin:100% 0;">50</div>
<div class="t" style="right:617px;top:374px;font-size:12px;line-height:14px;color:#000;transform:scaleX(0.9094);transform-origin:100% 0;">47</div>
<div class="t" style="right:550px;top:374px;font-size:12px;line-height:14px;color:#000;transform:scaleX(0.9094);transform-origin:100% 0;">54</div>
<div class="t" style="right:483px;top:374px;font-size:12px;line-height:14px;color:#000;transform:scaleX(0.8894);transform-origin:100% 0;">48.8</div>
<svg style="left:985px;top:391.4px" width="16" height="16" viewBox="0 0 16 16"><rect x="0" y="0" width="16" height="16" rx="2.6" fill="#78adca"/>
<circle cx="8" cy="8" r="7.1" fill="#d4eefc"/>
<ellipse cx="8" cy="4.6" rx="2.0" ry="3.5" fill="#1b86b6" transform="rotate(-22 8 8)"/><ellipse cx="8" cy="4.6" rx="2.0" ry="3.5" fill="#1b86b6" transform="rotate(38 8 8)"/><ellipse cx="8" cy="4.6" rx="2.0" ry="3.5" fill="#1b86b6" transform="rotate(98 8 8)"/><ellipse cx="8" cy="4.6" rx="2.0" ry="3.5" fill="#1b86b6" transform="rotate(158 8 8)"/><ellipse cx="8" cy="4.6" rx="2.0" ry="3.5" fill="#1b86b6" transform="rotate(218 8 8)"/><ellipse cx="8" cy="4.6" rx="2.0" ry="3.5" fill="#1b86b6" transform="rotate(278 8 8)"/><circle cx="8" cy="8" r="2.4" fill="#1b86b6"/></svg>
<div class="t" style="left:1003.2px;top:393px;font-size:12px;line-height:14px;color:#000;transform:scaleX(0.9509);transform-origin:0 0;">Cooling Fans</div>
<svg style="left:1002px;top:410.8px" width="14" height="14" viewBox="0 0 14 14"><rect x="0.5" y="0.5" width="13" height="13" fill="none" stroke="#2b6145" stroke-width="1" stroke-dasharray="1 1"/><rect x="1" y="1" width="12" height="12" fill="#2b6145"/>
<defs><linearGradient id="cg1002_410_8" x1="0" y1="0" x2="1" y2="1"><stop offset="0" stop-color="#f2f7f4"/><stop offset="1" stop-color="#c5cfcb"/></linearGradient></defs>
<rect x="3.5" y="3.5" width="7" height="7" fill="url(#cg1002_410_8)" stroke="#a9c9b8" stroke-width="1"/></svg>
<div class="t" style="left:1019.5px;top:412px;font-size:12px;line-height:14px;color:#000;transform:scaleX(0.8710);transform-origin:0 0;">CPU</div>
<div class="t" style="right:684px;top:412px;font-size:12px;line-height:14px;color:#000;transform:scaleX(0.9094);transform-origin:100% 0;">981</div>
<div class="t" style="right:617px;top:412px;font-size:12px;line-height:14px;color:#000;transform:scaleX(0.9094);transform-origin:100% 0;">783</div>
<div class="t" style="right:550px;top:412px;font-size:12px;line-height:14px;color:#000;transform:scaleX(0.9094);transform-origin:100% 0;">984</div>
<div class="t" style="right:483px;top:412px;font-size:12px;line-height:14px;color:#000;transform:scaleX(0.9094);transform-origin:100% 0;">978</div>
<svg style="left:987px;top:429px" width="12" height="16" viewBox="0 0 12 16"><circle cx="6" cy="8" r="5.7" fill="#fff" stroke="#5e4c44" stroke-width="1"/>
<path d="M8.0 0.4 L2.6 9.0 L5.6 8.4 L4.0 15.6 L9.6 6.4 L6.6 7.2 Z" fill="#ee7f1a"/></svg>
<div class="t" style="left:1003.2px;top:431px;font-size:12px;line-height:14px;color:#000;transform:scaleX(0.9838);transform-origin:0 0;">Voltages</div>
<svg style="left:1002px;top:448.8px" width="14" height="14" viewBox="0 0 14 14"><rect x="0.5" y="0.5" width="13" height="13" fill="none" stroke="#2b6145" stroke-width="1" stroke-dasharray="1 1"/><rect x="1" y="1" width="12" height="12" fill="#2b6145"/>
<defs><linearGradient id="cg1002_448_8" x1="0" y1="0" x2="1" y2="1"><stop offset="0" stop-color="#f2f7f4"/><stop offset="1" stop-color="#c5cfcb"/></linearGradient></defs>
<rect x="3.5" y="3.5" width="7" height="7" fill="url(#cg1002_448_8)" stroke="#a9c9b8" stroke-width="1"/></svg>
<div class="t" style="left:1019.5px;top:450px;font-size:12px;line-height:14px;color:#000;transform:scaleX(0.9115);transform-origin:0 0;">CPU Core</div>
<div class="t" style="right:684px;top:450px;font-size:12px;line-height:14px;color:#000;transform:scaleX(0.8939);transform-origin:100% 0;">1.248</div>
<div class="t" style="right:617px;top:450px;font-size:12px;line-height:14px;color:#000;transform:scaleX(0.8939);transform-origin:100% 0;">0.792</div>
<div class="t" style="right:550px;top:450px;font-size:12px;line-height:14px;color:#000;transform:scaleX(0.8939);transform-origin:100% 0;">1.308</div>
<div class="t" style="right:483px;top:450px;font-size:12px;line-height:14px;color:#000;transform:scaleX(0.8939);transform-origin:100% 0;">1.246</div>
<svg style="left:1003px;top:467px" width="12" height="16" viewBox="0 0 12 16"><circle cx="6" cy="8" r="5.7" fill="#fff" stroke="#5e4c44" stroke-width="1"/>
<path d="M8.0 0.4 L2.6 9.0 L5.6 8.4 L4.0 15.6 L9.6 6.4 L6.6 7.2 Z" fill="#ee7f1a"/></svg>
<div class="t" style="left:1019.5px;top:469px;font-size:12px;line-height:14px;color:#000;transform:scaleX(0.9885);transform-origin:0 0;">+5 V</div>
<div class="t" style="right:684px;top:469px;font-size:12px;line-height:14px;color:#000;transform:scaleX(0.8939);transform-origin:100% 0;">5.100</div>
<div class="t" style="right:617px;top:469px;font-size:12px;line-height:14px;color:#000;transform:scaleX(0.8939);transform-origin:100% 0;">5.070</div>
<div class="t" style="right:550px;top:469px;font-size:12px;line-height:14px;color:#000;transform:scaleX(0.8939);transform-origin:100% 0;">5.100</div>
<div class="t" style="right:483px;top:469px;font-size:12px;line-height:14px;color:#000;transform:scaleX(0.8939);transform-origin:100% 0;">5.083</div>
<svg style="left:1003px;top:486px" width="12" height="16" viewBox="0 0 12 16"><circle cx="6" cy="8" r="5.7" fill="#fff" stroke="#5e4c44" stroke-width="1"/>
<path d="M8.0 0.4 L2.6 9.0 L5.6 8.4 L4.0 15.6 L9.6 6.4 L6.6 7.2 Z" fill="#ee7f1a"/></svg>
<div class="t" style="left:1019.5px;top:488px;font-size:12px;line-height:14px;color:#000;transform:scaleX(0.9719);transform-origin:0 0;">+12 V</div>
<div class="t" style="right:684px;top:488px;font-size:12px;line-height:14px;color:#000;transform:scaleX(0.8967);transform-origin:100% 0;">13.417</div>
<div class="t" style="right:617px;top:488px;font-size:12px;line-height:14px;color:#000;transform:scaleX(0.8967);transform-origin:100% 0;">13.417</div>
<div class="t" style="right:550px;top:488px;font-size:12px;line-height:14px;color:#000;transform:scaleX(0.8967);transform-origin:100% 0;">13.494</div>
<div class="t" style="right:483px;top:488px;font-size:12px;line-height:14px;color:#000;transform:scaleX(0.8967);transform-origin:100% 0;">13.431</div>
<svg style="left:987px;top:505px" width="12" height="16" viewBox="0 0 12 16"><circle cx="6" cy="8" r="5.7" fill="#fff" stroke="#5e4c44" stroke-width="1"/>
<path d="M8.0 0.4 L2.6 9.0 L5.6 8.4 L4.0 15.6 L9.6 6.4 L6.6 7.2 Z" fill="#ee7f1a"/></svg>
<div class="t" style="left:1003.2px;top:507px;font-size:12px;line-height:14px;color:#000;transform:scaleX(0.9349);transform-origin:0 0;">Powers</div>
<svg style="left:1002px;top:524.8px" width="14" height="14" viewBox="0 0 14 14"><rect x="0.5" y="0.5" width="13" height="13" fill="none" stroke="#2b6145" stroke-width="1" stroke-dasharray="1 1"/><rect x="1" y="1" width="12" height="12" fill="#2b6145"/>
<defs><linearGradient id="cg1002_524_8" x1="0" y1="0" x2="1" y2="1"><stop offset="0" stop-color="#f2f7f4"/><stop offset="1" stop-color="#c5cfcb"/></linearGradient></defs>
<rect x="3.5" y="3.5" width="7" height="7" fill="url(#cg1002_524_8)" stroke="#a9c9b8" stroke-width="1"/></svg>
<div class="t" style="left:1019.5px;top:526px;font-size:12px;line-height:14px;color:#000;transform:scaleX(0.9080);transform-origin:0 0;">CPU Package</div>
<div class="t" style="right:684px;top:526px;font-size:12px;line-height:14px;color:#000;transform:scaleX(0.8939);transform-origin:100% 0;">57.49</div>
<div class="t" style="right:617px;top:526px;font-size:12px;line-height:14px;color:#000;transform:scaleX(0.8939);transform-origin:100% 0;">13.56</div>
<div class="t" style="right:550px;top:526px;font-size:12px;line-height:14px;color:#000;transform:scaleX(0.8939);transform-origin:100% 0;">60.50</div>
<div class="t" style="right:483px;top:526px;font-size:12px;line-height:14px;color:#000;transform:scaleX(0.8939);transform-origin:100% 0;">56.16</div>
<svg style="left:1002px;top:543.8px" width="14" height="14" viewBox="0 0 14 14"><rect x="0.5" y="0.5" width="13" height="13" fill="none" stroke="#2b6145" stroke-width="1" stroke-dasharray="1 1"/><rect x="1" y="1" width="12" height="12" fill="#2b6145"/>
<defs><linearGradient id="cg1002_543_8" x1="0" y1="0" x2="1" y2="1"><stop offset="0" stop-color="#f2f7f4"/><stop offset="1" stop-color="#c5cfcb"/></linearGradient></defs>
<rect x="3.5" y="3.5" width="7" height="7" fill="url(#cg1002_543_8)" stroke="#a9c9b8" stroke-width="1"/></svg>
<div class="t" style="left:1019.5px;top:545px;font-size:12px;line-height:14px;color:#000;transform:scaleX(0.9220);transform-origin:0 0;">CPU IA Cores</div>
<div class="t" style="right:684px;top:545px;font-size:12px;line-height:14px;color:#000;transform:scaleX(0.8939);transform-origin:100% 0;">45.78</div>
<div class="t" style="right:617px;top:545px;font-size:12px;line-height:14px;color:#000;transform:scaleX(0.8894);transform-origin:100% 0;">2.37</div>
<div class="t" style="right:550px;top:545px;font-size:12px;line-height:14px;color:#000;transform:scaleX(0.8939);transform-origin:100% 0;">48.89</div>
<div class="t" style="right:483px;top:545px;font-size:12px;line-height:14px;color:#000;transform:scaleX(0.8939);transform-origin:100% 0;">44.48</div>
<svg style="left:987px;top:563px" width="12" height="15" viewBox="0 0 12 15"><rect x="0" y="0.4" width="12" height="14.6" fill="#0a0a0a"/>
<defs><linearGradient id="ch987_563" x1="0" y1="0" x2="1" y2="1"><stop offset="0" stop-color="#707070"/><stop offset="1" stop-color="#3e3e3e"/></linearGradient></defs>
<path d="M2 1.4 H4 C4.4 4 7.6 4 8 1.4 H10 V13.6 H2 Z" fill="url(#ch987_563)"/>
<path d="M4.2 0 C4.6 2.6 7.4 2.6 7.8 0 Z" fill="#fff"/><rect x="0" y="2.60" width="1.2" height="0.95" fill="#fff"/><rect x="10.8" y="2.60" width="1.2" height="0.95" fill="#fff"/><rect x="0" y="4.55" width="1.2" height="0.95" fill="#fff"/><rect x="10.8" y="4.55" width="1.2" height="0.95" fill="#fff"/><rect x="0" y="6.50" width="1.2" height="0.95" fill="#fff"/><rect x="10.8" y="6.50" width="1.2" height="0.95" fill="#fff"/><rect x="0" y="8.45" width="1.2" height="0.95" fill="#fff"/><rect x="10.8" y="8.45" width="1.2" height="0.95" fill="#fff"/><rect x="0" y="10.40" width="1.2" height="0.95" fill="#fff"/><rect x="10.8" y="10.40" width="1.2" height="0.95" fill="#fff"/><rect x="0" y="12.35" width="1.2" height="0.95" fill="#fff"/><rect x="10.8" y="12.35" width="1.2" height="0.95" fill="#fff"/></svg>
<div class="t" style="left:1003.2px;top:564px;font-size:12px;line-height:14px;color:#000;transform:scaleX(0.9290);transform-origin:0 0;">Clocks</div>
<svg style="left:1002px;top:581.8px" width="14" height="14" viewBox="0 0 14 14"><rect x="0.5" y="0.5" width="13" height="13" fill="none" stroke="#2b6145" stroke-width="1" stroke-dasharray="1 1"/><rect x="1" y="1" width="12" height="12" fill="#2b6145"/>
<defs><linearGradient id="cg1002_581_8" x1="0" y1="0" x2="1" y2="1"><stop offset="0" stop-color="#f2f7f4"/><stop offset="1" stop-color="#c5cfcb"/></linearGradient></defs>
<rect x="3.5" y="3.5" width="7" height="7" fill="url(#cg1002_581_8)" stroke="#a9c9b8" stroke-width="1"/></svg>
<div class="t" style="left:1019.5px;top:583px;font-size:12px;line-height:14px;color:#000;transform:scaleX(0.9160);transform-origin:0 0;">CPU Clock</div>
<div class="t" style="right:684px;top:583px;font-size:12px;line-height:14px;color:#000;transform:scaleX(0.9094);transform-origin:100% 0;">4201</div>
<div class="t" style="right:617px;top:583px;font-size:12px;line-height:14px;color:#000;transform:scaleX(0.9094);transform-origin:100% 0;">1499</div>
<div class="t" style="right:550px;top:583px;font-size:12px;line-height:14px;color:#000;transform:scaleX(0.9094);transform-origin:100% 0;">4204</div>
<div class="t" style="right:483px;top:583px;font-size:12px;line-height:14px;color:#000;transform:scaleX(0.8967);transform-origin:100% 0;">4064.0</div>
<svg style="left:1003px;top:601px" width="12" height="15" viewBox="0 0 12 15"><rect x="0" y="0.4" width="12" height="14.6" fill="#0a0a0a"/>
<defs><linearGradient id="ch1003_601" x1="0" y1="0" x2="1" y2="1"><stop offset="0" stop-color="#707070"/><stop offset="1" stop-color="#3e3e3e"/></linearGradient></defs>
<path d="M2 1.4 H4 C4.4 4 7.6 4 8 1.4 H10 V13.6 H2 Z" fill="url(#ch1003_601)"/>
<path d="M4.2 0 C4.6 2.6 7.4 2.6 7.8 0 Z" fill="#fff"/><rect x="0" y="2.60" width="1.2" height="0.95" fill="#fff"/><rect x="10.8" y="2.60" width="1.2" height="0.95" fill="#fff"/><rect x="0" y="4.55" width="1.2" height="0.95" fill="#fff"/><rect x="10.8" y="4.55" width="1.2" height="0.95" fill="#fff"/><rect x="0" y="6.50" width="1.2" height="0.95" fill="#fff"/><rect x="10.8" y="6.50" width="1.2" height="0.95" fill="#fff"/><rect x="0" y="8.45" width="1.2" height="0.95" fill="#fff"/><rect x="10.8" y="8.45" width="1.2" height="0.95" fill="#fff"/><rect x="0" y="10.40" width="1.2" height="0.95" fill="#fff"/><rect x="10.8" y="10.40" width="1.2" height="0.95" fill="#fff"/><rect x="0" y="12.35" width="1.2" height="0.95" fill="#fff"/><rect x="10.8" y="12.35" width="1.2" height="0.95" fill="#fff"/></svg>
<div class="t" style="left:1019.5px;top:602px;font-size:12px;line-height:14px;color:#000;transform:scaleX(0.9861);transform-origin:0 0;">North Bridge Clock</div>
<div class="t" style="right:684px;top:602px;font-size:12px;line-height:14px;color:#000;transform:scaleX(0.9094);transform-origin:100% 0;">3801</div>
<div class="t" style="right:617px;top:602px;font-size:12px;line-height:14px;color:#000;transform:scaleX(0.9094);transform-origin:100% 0;">1299</div>
<div class="t" style="right:550px;top:602px;font-size:12px;line-height:14px;color:#000;transform:scaleX(0.9094);transform-origin:100% 0;">3804</div>
<div class="t" style="right:483px;top:602px;font-size:12px;line-height:14px;color:#000;transform:scaleX(0.8967);transform-origin:100% 0;">3674.6</div>
<svg style="left:1002px;top:619.8px" width="14" height="14" viewBox="0 0 14 14"><rect x="0.5" y="0.5" width="13" height="13" fill="none" stroke="#2b6145" stroke-width="1" stroke-dasharray="1 1"/><rect x="1" y="1" width="12" height="12" fill="#2b6145"/>
<defs><linearGradient id="cg1002_619_8" x1="0" y1="0" x2="1" y2="1"><stop offset="0" stop-color="#f2f7f4"/><stop offset="1" stop-color="#c5cfcb"/></linearGradient></defs>
<rect x="3.5" y="3.5" width="7" height="7" fill="url(#cg1002_619_8)" stroke="#a9c9b8" stroke-width="1"/></svg>
<div class="t" style="left:1019.5px;top:621px;font-size:12px;line-height:14px;color:#000;transform:scaleX(0.9342);transform-origin:0 0;">CPU Core #1 Clock</div>
<div class="t" style="right:684px;top:621px;font-size:12px;line-height:14px;color:#000;transform:scaleX(0.9094);transform-origin:100% 0;">4197</div>
<div class="t" style="right:617px;top:621px;font-size:12px;line-height:14px;color:#000;transform:scaleX(0.9094);transform-origin:100% 0;">1499</div>
<div class="t" style="right:550px;top:621px;font-size:12px;line-height:14px;color:#000;transform:scaleX(0.9094);transform-origin:100% 0;">4204</div>
<div class="t" style="right:483px;top:621px;font-size:12px;line-height:14px;color:#000;transform:scaleX(0.8967);transform-origin:100% 0;">4082.6</div>
<svg style="left:1002px;top:638.8px" width="14" height="14" viewBox="0 0 14 14"><rect x="0.5" y="0.5" width="13" height="13" fill="none" stroke="#2b6145" stroke-width="1" stroke-dasharray="1 1"/><rect x="1" y="1" width="12" height="12" fill="#2b6145"/>
<defs><linearGradient id="cg1002_638_8" x1="0" y1="0" x2="1" y2="1"><stop offset="0" stop-color="#f2f7f4"/><stop offset="1" stop-color="#c5cfcb"/></linearGradient></defs>
<rect x="3.5" y="3.5" width="7" height="7" fill="url(#cg1002_638_8)" stroke="#a9c9b8" stroke-width="1"/></svg>
<div class="t" style="left:1019.5px;top:640px;font-size:12px;line-height:14px;color:#000;transform:scaleX(0.9342);transform-origin:0 0;">CPU Core #2 Clock</div>
<div class="t" style="right:684px;top:640px;font-size:12px;line-height:14px;color:#000;transform:scaleX(0.9094);transform-origin:100% 0;">4197</div>
<div class="t" style="right:617px;top:640px;font-size:12px;line-height:14px;color:#000;transform:scaleX(0.9094);transform-origin:100% 0;">1499</div>
<div class="t" style="right:550px;top:640px;font-size:12px;line-height:14px;color:#000;transform:scaleX(0.9094);transform-origin:100% 0;">4204</div>
<div class="t" style="right:483px;top:640px;font-size:12px;line-height:14px;color:#000;transform:scaleX(0.8967);transform-origin:100% 0;">4054.1</div>
<svg style="left:1002px;top:657.8px" width="14" height="14" viewBox="0 0 14 14"><rect x="0.5" y="0.5" width="13" height="13" fill="none" stroke="#2b6145" stroke-width="1" stroke-dasharray="1 1"/><rect x="1" y="1" width="12" height="12" fill="#2b6145"/>
<defs><linearGradient id="cg1002_657_8" x1="0" y1="0" x2="1" y2="1"><stop offset="0" stop-color="#f2f7f4"/><stop offset="1" stop-color="#c5cfcb"/></linearGradient></defs>
<rect x="3.5" y="3.5" width="7" height="7" fill="url(#cg1002_657_8)" stroke="#a9c9b8" stroke-width="1"/></svg>
<div class="t" style="left:1019.5px;top:659px;font-size:12px;line-height:14px;color:#000;transform:scaleX(0.9342);transform-origin:0 0;">CPU Core #3 Clock</div>
<div class="t" style="right:684px;top:659px;font-size:12px;line-height:14px;color:#000;transform:scaleX(0.9094);transform-origin:100% 0;">4197</div>
<div class="t" style="right:617px;top:659px;font-size:12px;line-height:14px;color:#000;transform:scaleX(0.9094);transform-origin:100% 0;">1499</div>
<div class="t" style="right:550px;top:659px;font-size:12px;line-height:14px;color:#000;transform:scaleX(0.9094);transform-origin:100% 0;">4204</div>
<div class="t" style="right:483px;top:659px;font-size:12px;line-height:14px;color:#000;transform:scaleX(0.8967);transform-origin:100% 0;">4054.1</div>
<svg style="left:1002px;top:676.8px" width="14" height="14" viewBox="0 0 14 14"><rect x="0.5" y="0.5" width="13" height="13" fill="none" stroke="#2b6145" stroke-width="1" stroke-dasharray="1 1"/><rect x="1" y="1" width="12" height="12" fill="#2b6145"/>
<defs><linearGradient id="cg1002_676_8" x1="0" y1="0" x2="1" y2="1"><stop offset="0" stop-color="#f2f7f4"/><stop offset="1" stop-color="#c5cfcb"/></linearGradient></defs>
<rect x="3.5" y="3.5" width="7" height="7" fill="url(#cg1002_676_8)" stroke="#a9c9b8" stroke-width="1"/></svg>
<div class="t" style="left:1019.5px;top:678px;font-size:12px;line-height:14px;color:#000;transform:scaleX(0.9342);transform-origin:0 0;">CPU Core #4 Clock</div>
<div class="t" style="right:684px;top:678px;font-size:12px;line-height:14px;color:#000;transform:scaleX(0.9094);transform-origin:100% 0;">4197</div>
<div class="t" style="right:617px;top:678px;font-size:12px;line-height:14px;color:#000;transform:scaleX(0.9094);transform-origin:100% 0;">1499</div>
<div class="t" style="right:550px;top:678px;font-size:12px;line-height:14px;color:#000;transform:scaleX(0.9094);transform-origin:100% 0;">4204</div>
<div class="t" style="right:483px;top:678px;font-size:12px;line-height:14px;color:#000;transform:scaleX(0.8967);transform-origin:100% 0;">4058.5</div>
<div class="t" style="left:967.5px;top:732.6px;font-size:12px;line-height:14px;color:#000;transform:scaleX(0.9770);transform-origin:0 0;">Remaining Battery:</div>
<div style="left:1079px;top:728px;width:80px;height:24px;background:#000;"></div>
<div class="t" style="left:1092.4px;top:733px;font-size:11px;line-height:12px;color:#2fc02f;-webkit-text-stroke:0.45px #2fc02f;transform:scaleX(1.0450);transform-origin:0 0;">No battery</div>
<div class="t" style="left:1181.3px;top:732.6px;font-size:12px;line-height:14px;color:#000;transform:scaleX(0.9396);transform-origin:0 0;">Test Started:</div>
<div style="left:1257px;top:728px;width:140px;height:24px;background:#000;"></div>
<div class="t" style="left:1275.7px;top:733px;font-size:11px;line-height:12px;color:#2fc02f;-webkit-text-stroke:0.45px #2fc02f;transform:scaleX(0.9982);transform-origin:0 0;">07/01/2017 12:45:34</div>
<div class="t" style="left:1420px;top:732.6px;font-size:12px;line-height:14px;color:#000;transform:scaleX(0.9521);transform-origin:0 0;">Elapsed Time:</div>
<div style="left:1505px;top:728px;width:80px;height:24px;background:#000;"></div>
<div class="t" style="left:1523.8px;top:733px;font-size:11px;line-height:12px;color:#2fc02f;-webkit-text-stroke:0.45px #2fc02f;transform:scaleX(0.9707);transform-origin:0 0;">01:00:02</div>
<div style="left:952px;top:774px;width:73px;height:21px;background:#e1e1e1;border:1px solid #adadad;box-sizing:border-box;"></div>
<div class="t" style="left:976.4px;top:778px;font-size:12px;line-height:14px;color:#000;transform:scaleX(0.9273);transform-origin:0 0;">Start</div>
<div style="left:1033px;top:774px;width:73px;height:21px;background:#cccccc;border:1px solid #bfbfbf;box-sizing:border-box;"></div>
<div class="t" style="left:1057.5px;top:778px;font-size:12px;line-height:14px;color:#838383;transform:scaleX(0.9276);transform-origin:0 0;">Stop</div>
<div style="left:1137px;top:774px;width:73px;height:21px;background:#e5f1fb;border:1px solid #0078d7;box-sizing:border-box;"></div>
<div class="t" style="left:1160.6px;top:778px;font-size:12px;line-height:14px;color:#000;transform:scaleX(0.9171);transform-origin:0 0;">Clear</div>
<div style="left:1218px;top:774px;width:73px;height:21px;background:#e1e1e1;border:1px solid #adadad;box-sizing:border-box;"></div>
<div class="t" style="left:1242.3px;top:778px;font-size:12px;line-height:14px;color:#000;transform:scaleX(0.8738);transform-origin:0 0;">Save</div>
<div style="left:1322px;top:774px;width:73px;height:21px;background:#e1e1e1;border:1px solid #adadad;box-sizing:border-box;"></div>
<div class="t" style="left:1341.6px;top:778px;font-size:12px;line-height:14px;color:#000;transform:scaleX(0.8812);transform-origin:0 0;">CPUID</div>
<div style="left:1403px;top:774px;width:73px;height:21px;background:#e1e1e1;border:1px solid #adadad;box-sizing:border-box;"></div>
<div class="t" style="left:1409.4px;top:778px;font-size:12px;line-height:14px;color:#000;transform:scaleX(0.9351);transform-origin:0 0;">Preferences</div>
<div style="left:1804px;top:774px;width:73px;height:21px;background:#e1e1e1;border:1px solid #adadad;box-sizing:border-box;"></div>
<div class="t" style="left:1826.9px;top:778px;font-size:12px;line-height:14px;color:#000;transform:scaleX(0.9224);transform-origin:0 0;">Close</div>
<div style="left:0px;top:0px;width:1886px;height:1px;background:#8a9fa8;"></div>
<div style="left:0px;top:0px;width:1px;height:804px;background:#7ba6c8;"></div>
<div style="left:1px;top:1px;width:1px;height:802px;background:#e6f6fd;"></div>
<div style="left:942px;top:1px;width:2px;height:803px;background:#75a9d5;"></div>
<div style="left:941px;top:1px;width:1px;height:802px;background:#e6f6fd;"></div>
<div style="left:944px;top:1px;width:1px;height:802px;background:#e6f6fd;"></div>
<div style="left:1884px;top:1px;width:2px;height:803px;background:#75a9d5;"></div>
<div style="left:1883px;top:1px;width:1px;height:802px;background:#e6f6fd;"></div>
<div style="left:0px;top:802px;width:1886px;height:1px;background:#d3e4ee;"></div>
<div style="left:0px;top:803px;width:1886px;height:1px;background:#7fa5c0;"></div>
<svg style="left:1726px;top:760px" width="34" height="40" viewBox="0 0 34 40"><defs>
<linearGradient id="wg1" x1="0" y1="0" x2="0" y2="1"><stop offset="0" stop-color="#9a9a9a"/><stop offset="1" stop-color="#cfcfcf"/></linearGradient>
<linearGradient id="wg2" x1="0" y1="0" x2="1" y2="1"><stop offset="0" stop-color="#b4b4b4"/><stop offset="1" stop-color="#5e5e5e"/></linearGradient>
<linearGradient id="wb1" x1="0" y1="0" x2="1" y2="1"><stop offset="0" stop-color="#0a34a0"/><stop offset="1" stop-color="#0d4fc8"/></linearGradient>
<linearGradient id="wb2" x1="0" y1="0" x2="1" y2="0"><stop offset="0" stop-color="#0a40b4"/><stop offset="0.6" stop-color="#1a7ee8"/><stop offset="1" stop-color="#0a40b4"/></linearGradient>
<linearGradient id="wb3" x1="0" y1="0" x2="1" y2="0"><stop offset="0" stop-color="#0a44bc"/><stop offset="1" stop-color="#1266dc"/></linearGradient>
</defs>
<g stroke="#fff" stroke-width="1.2" stroke-opacity="0.85" stroke-linejoin="round">
<path d="M2.5 3.2 H14.2 V15 L2.5 17.8 Z" fill="url(#wg1)"/>
<path d="M19.4 20.6 L30.6 16.4 V34.9 L19.4 31.1 Z" fill="url(#wg2)"/>
<path d="M19.2 3.2 H30.6 V14 L19.2 16.6 Z" fill="url(#wb1)"/>
<path d="M2.2 19.4 L30.6 13 V15.6 L13.8 20.4 L13.7 31.4 L2.2 35.2 Z" fill="url(#wb3)"/>
<path d="M2.2 19.4 L19.2 14.8 L30.6 13 V15.6 L13.8 20.4 Z" fill="url(#wb2)" stroke="none"/>
</g></svg>
<div class="t" style="left:1761.0px;top:766px;font-size:9.7px;line-height:11px;font-weight:bold;color:#5c5650;opacity:.92;transform:scaleX(1.12);transform-origin:0 0">A</div>
<div class="t" style="left:1773.5px;top:766px;font-size:9.7px;line-height:11px;font-weight:bold;color:#5c5650;opacity:.92;transform:scaleX(1.12);transform-origin:0 0">C</div>
<div class="t" style="left:1786.0px;top:766px;font-size:9.7px;line-height:11px;font-weight:bold;color:#5c5650;opacity:.92;transform:scaleX(1.12);transform-origin:0 0">T</div>
<div class="t" style="left:1797.3px;top:766px;font-size:9.7px;line-height:11px;font-weight:bold;color:#5c5650;opacity:.92;transform:scaleX(1.12);transform-origin:0 0">U</div>
<div class="t" style="left:1809.7px;top:766px;font-size:9.7px;line-height:11px;font-weight:bold;color:#5c5650;opacity:.92;transform:scaleX(1.12);transform-origin:0 0">A</div>
<div class="t" style="left:1822.2px;top:766px;font-size:9.7px;line-height:11px;font-weight:bold;color:#5c5650;opacity:.92;transform:scaleX(1.12);transform-origin:0 0">L</div>
<div class="t" style="left:1833.5px;top:766px;font-size:9.7px;line-height:11px;font-weight:bold;color:#5c5650;opacity:.92;transform:scaleX(1.12);transform-origin:0 0">I</div>
<div class="t" style="left:1841.2px;top:766px;font-size:9.7px;line-height:11px;font-weight:bold;color:#5c5650;opacity:.92;transform:scaleX(1.12);transform-origin:0 0">D</div>
<div class="t" style="left:1853.7px;top:766px;font-size:9.7px;line-height:11px;font-weight:bold;color:#5c5650;opacity:.92;transform:scaleX(1.12);transform-origin:0 0">A</div>
<div class="t" style="left:1866.2px;top:766px;font-size:9.7px;line-height:11px;font-weight:bold;color:#5c5650;opacity:.92;transform:scaleX(1.12);transform-origin:0 0">D</div>
<div class="t" style="left:1760.4px;top:775px;font-size:15.6px;line-height:19px;font-weight:bold;color:#0b3cae;opacity:.93;transform:scaleX(1.2366);transform-origin:0 0;-webkit-text-stroke:0.5px #0b3cae">HARDWARE</div>
</body></html>
